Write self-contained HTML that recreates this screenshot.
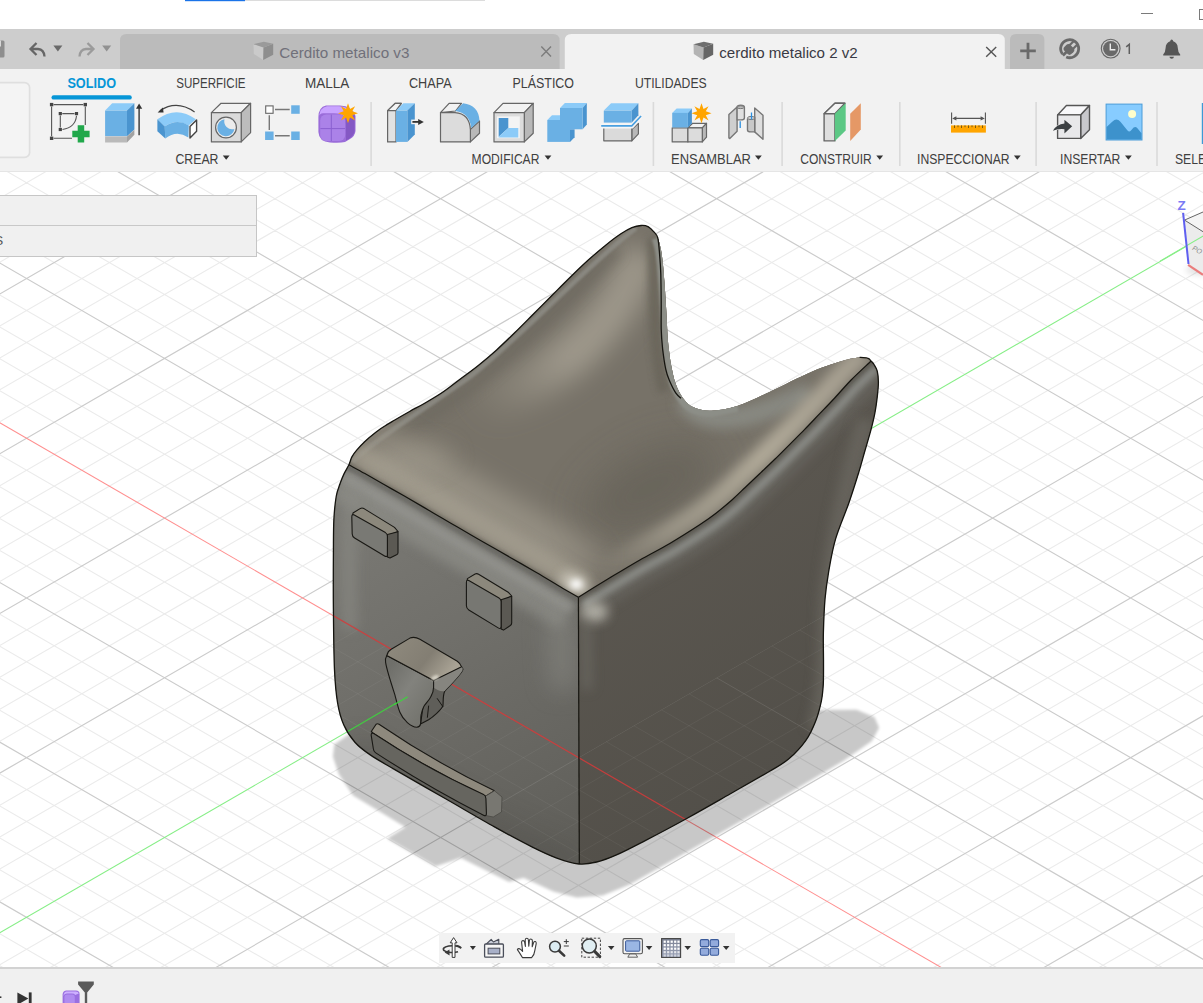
<!DOCTYPE html>
<html><head><meta charset="utf-8"><title>Fusion 360</title>
<style>
*{box-sizing:border-box;margin:0;padding:0}
html,body{width:1203px;height:1003px;overflow:hidden;background:#fff}
body{font-family:"Liberation Sans",sans-serif;position:relative;color:#3c3c3c}
.abs{position:absolute}
#titlebar{left:0;top:0;width:1203px;height:29px;background:#fff}
#tabbar{left:0;top:29px;width:1203px;height:40px;background:#cdcdcd}
#toolbar{left:0;top:69px;width:1203px;height:102.6px;background:#f2f2f2;border-bottom:1.6px solid #e5e5e5;z-index:2}
#viewport{left:0;top:170px;width:1203px;height:797px;background:#fff;overflow:hidden}
#bottombar{left:0;top:967px;width:1203px;height:36px;background:#f0f0f0;border-top:2px solid #d2d2d2}
.tab{position:absolute;top:5px;height:35px;border-radius:6px 6px 0 0;font-size:14px}
.rt{position:absolute;font-size:12.5px;color:#3c3c3c;white-space:nowrap;line-height:14px}
.gl{position:absolute;font-size:11.5px;color:#3c3c3c;white-space:nowrap;line-height:13px}
.sep{position:absolute;top:32px;width:1px;height:64px;background:#dadada}
svg{position:absolute;overflow:visible}
</style></head><body>
<div id="titlebar" class="abs"></div>
<div id="tabbar" class="abs"></div>
<div id="toolbar" class="abs"></div>
<svg width="1203" height="171" viewBox="0 0 1203 171" style="left:0;top:0;z-index:3" font-family="Liberation Sans, sans-serif">
<!-- title strip -->
<rect x="185" y="0" width="60" height="1.2" fill="#1a73e8"/>
<rect x="245" y="0" width="240" height="1" fill="#dcdcdc"/>
<rect x="1141" y="13" width="12" height="1" fill="#7a7a7a"/>
<rect x="1199.5" y="9.5" width="10" height="10" fill="none" stroke="#7a7a7a" stroke-width="1"/>
<!-- tabs -->
<path d="M120 69 V40.5 Q120 34 126.5 34 H553.1 Q559.6 34 559.6 40.5 V69Z" fill="#bbbbbb"/>
<path d="M564.8 69 V40.5 Q564.8 34 571.3 34 H998.3 Q1004.8 34 1004.8 40.5 V69Z" fill="#f2f2f2"/>
<path d="M1010 69 V40 Q1010 34 1016 34 H1038.4 Q1044.4 34 1044.4 40 V69Z" fill="#bbbbbb"/>
<!-- save partial, undo, redo -->
<rect x="-3" y="40.5" width="7.5" height="17" rx="1.5" fill="#8e8e8e"/>
<rect x="-1" y="40.5" width="2" height="6" fill="#d8d8d8"/>
<path d="M36.5 43 L30.5 49 L36.5 55 M31 49 H38 Q44 49.5 44.5 56.5" fill="none" stroke="#666" stroke-width="2.3" stroke-linejoin="miter"/>
<path d="M53.4 45.4 H62.4 L57.9 51.4Z" fill="#6a6a6a"/>
<path d="M87.5 43 L93.5 49 L87.5 55 M93 49 H86 Q80 49.5 79.5 56.5" fill="none" stroke="#9b9b9b" stroke-width="2.3"/>
<path d="M102.2 45.4 H111.2 L106.7 51.4Z" fill="#919191"/>
<!-- inactive tab content -->
<g>
<path d="M253.5 44.2 L263.5 47.6 L263.2 59.9 L253.8 53.9Z" fill="#cacaca"/>
<path d="M263.5 47.6 L273.2 43.8 L273.2 54.7 L263.2 59.9Z" fill="#8e8e8e"/>
<path d="M253.5 44.2 L263.9 41.7 L273.2 43.8 L263.5 47.6Z" fill="#9a9a9a"/>
</g>
<text x="279.2" y="57.6" font-size="15" fill="#70707a" textLength="130.2" lengthAdjust="spacingAndGlyphs">Cerdito metalico v3</text>
<path d="M541.3 46.5 L551 56.6 M551 46.5 L541.3 56.6" stroke="#7c7c7c" stroke-width="1.4"/>
<!-- active tab content -->
<g>
<path d="M693.5 44.2 L703.5 47.6 L703.2 59.9 L693.8 53.9Z" fill="#b4b4b4"/>
<path d="M703.5 47.6 L713.2 43.8 L713.2 54.7 L703.2 59.9Z" fill="#666"/>
<path d="M693.5 44.2 L703.9 41.7 L713.2 43.8 L703.5 47.6Z" fill="#6e6e6e"/>
</g>
<text x="719.2" y="57.6" font-size="15" fill="#3a3a44" textLength="138.6" lengthAdjust="spacingAndGlyphs">cerdito metalico 2 v2</text>
<path d="M986.2 46.9 L996.2 56.8 M996.2 46.9 L986.2 56.8" stroke="#555" stroke-width="1.4"/>
<!-- plus -->
<path d="M1028 42.8 V59 M1020.2 50.9 H1035.8" stroke="#6a6a6a" stroke-width="2.8"/>
<!-- job status -->
<path d="M1062.4 54 A9 9 0 1 1 1066.2 57" fill="none" stroke="#6a6a6a" stroke-width="2.8"/>
<g transform="rotate(45 1069.8 48.6)" fill="#6a6a6a">
<rect x="1064.8" y="45.6" width="10" height="8.4" rx="3"/>
<rect x="1066.2" y="40.4" width="2.2" height="6.4"/><rect x="1071.2" y="40.4" width="2.2" height="6.4"/>
<rect x="1068.4" y="53" width="2.8" height="5.4"/>
</g>
<!-- clock -->
<circle cx="1110.7" cy="48.6" r="9.4" fill="none" stroke="#666" stroke-width="1.1"/>
<circle cx="1110.7" cy="48.6" r="7.6" fill="#696969"/>
<path d="M1110.3 43.6 V49.7 H1115.4" fill="none" stroke="#ececec" stroke-width="1.4"/>
<path d="M1126.2 46.9 L1129.3 44.4 V53.9" fill="none" stroke="#5e5e5e" stroke-width="1.5"/>
<!-- bell -->
<path d="M1171.7 39.6 Q1173 39.6 1173.2 41.2 Q1177.6 42.6 1177.8 48 Q1178 52.5 1180.2 54.6 V55.6 H1163.2 V54.6 Q1165.4 52.5 1165.6 48 Q1165.8 42.6 1170.2 41.2 Q1170.4 39.6 1171.7 39.6Z" fill="#555"/>
<path d="M1169.4 56.8 H1174 Q1173.6 58.8 1171.7 58.8 Q1169.8 58.8 1169.4 56.8Z" fill="#555"/>
<!-- workspace box -->
<rect x="-10" y="82.6" width="39.6" height="74.8" rx="5" fill="#f4f4f4" stroke="#dfdfdf" stroke-width="1.7"/>
<!-- ribbon tabs -->
<g font-size="14" fill="#404040">
<text x="67.4" y="87.8" font-weight="bold" fill="#0696d7" textLength="48.6" lengthAdjust="spacingAndGlyphs">SOLIDO</text>
<text x="176.2" y="87.8" textLength="69.4" lengthAdjust="spacingAndGlyphs">SUPERFICIE</text>
<text x="305" y="87.8" textLength="44.4" lengthAdjust="spacingAndGlyphs">MALLA</text>
<text x="409" y="87.8" textLength="42.6" lengthAdjust="spacingAndGlyphs">CHAPA</text>
<text x="512.5" y="87.8" textLength="61.5" lengthAdjust="spacingAndGlyphs">PLÁSTICO</text>
<text x="634.9" y="87.8" textLength="71.8" lengthAdjust="spacingAndGlyphs">UTILIDADES</text>
</g>
<rect x="51.5" y="95.2" width="80.3" height="4.4" rx="2.2" fill="#0696d7"/>
<!-- separators -->
<g fill="#dadada">
<rect x="370.3" y="102" width="1.6" height="64"/><rect x="652.6" y="102" width="1.6" height="64"/><rect x="781.3" y="102" width="1.6" height="64"/>
<rect x="899" y="102" width="1.6" height="64"/><rect x="1035.3" y="102" width="1.6" height="64"/><rect x="1156.2" y="102" width="1.6" height="64"/>
</g>
<!-- group labels -->
<g font-size="14" fill="#404040">
<text x="175.5" y="163.7" textLength="43" lengthAdjust="spacingAndGlyphs">CREAR</text>
<text x="471.6" y="163.7" textLength="67.8" lengthAdjust="spacingAndGlyphs">MODIFICAR</text>
<text x="671" y="163.7" textLength="79.9" lengthAdjust="spacingAndGlyphs">ENSAMBLAR</text>
<text x="800.2" y="163.7" textLength="71.6" lengthAdjust="spacingAndGlyphs">CONSTRUIR</text>
<text x="917" y="163.7" textLength="92.6" lengthAdjust="spacingAndGlyphs">INSPECCIONAR</text>
<text x="1060" y="163.7" textLength="60.4" lengthAdjust="spacingAndGlyphs">INSERTAR</text>
<text x="1175" y="163.7" textLength="87.2" lengthAdjust="spacingAndGlyphs">SELECCIONAR</text>
</g>
<g fill="#333">
<path d="M222.8 155.4 h6.8 l-3.4 4.3z"/><path d="M544.6 155.4 h6.8 l-3.4 4.3z"/><path d="M755 155.4 h6.8 l-3.4 4.3z"/>
<path d="M876.3 155.4 h6.8 l-3.4 4.3z"/><path d="M1013.9 155.4 h6.8 l-3.4 4.3z"/><path d="M1125 155.4 h6.8 l-3.4 4.3z"/>
</g>
<rect x="1201.8" y="103" width="2" height="41" fill="#3d9ad6"/>
<!-- ICON 1 sketch -->
<g stroke="#555" stroke-width="1.1" fill="none">
<path d="M53.6 104.6 H83.3 M51.6 106.6 V136.3 M85.3 106.6 V125 M53.6 138.3 H72"/>
<path d="M62.3 113.6 H74.5 M60.3 115.6 V127.5 M76.5 115.8 Q75.5 127.5 62.5 129.5"/>
</g>
<g fill="#444">
<rect x="49.9" y="102.9" width="3.4" height="3.4"/><rect x="83.6" y="102.9" width="3.4" height="3.4"/><rect x="49.9" y="136.6" width="3.4" height="3.4"/>
<rect x="58.7" y="112" width="3.2" height="3.2"/><rect x="74.9" y="112" width="3.2" height="3.2"/><rect x="58.7" y="127.9" width="3.2" height="3.2"/>
</g>
<path d="M77.7 125.3 h6.5 v5.4 h5.4 v6.5 h-5.4 v5.4 h-6.5 v-5.4 h-5.4 v-6.5 h5.4z" fill="#21a84b"/>
<!-- ICON 2 extrude -->
<path d="M105.1 110.6 L112.2 103.3 H134.4 L127 110.6Z" fill="#8ccbf8"/>
<path d="M127 110.6 L134.4 103.3 V129.6 L127 136.2Z" fill="#4a94cf"/>
<rect x="105.1" y="110.6" width="21.9" height="25.6" fill="#6ab0e4"/>
<rect x="105.1" y="136.4" width="21.9" height="6.1" fill="#bababa"/>
<path d="M127 136.4 L134.4 129.8 V134.8 L127 142.5Z" fill="#a2a2a2"/>
<path d="M139.1 108 V135.2" stroke="#333" stroke-width="1.4"/><path d="M139.1 103.4 L142.2 108.8 H136Z" fill="#333"/>
<!-- ICON 3 revolve -->
<path d="M194.6 112 Q176.6 99.5 160 110.8" fill="none" stroke="#444" stroke-width="1.2"/>
<path d="M157.6 112.4 L162.8 107.4 L163.6 112.6Z" fill="#333"/>
<path d="M157.4 119.3 Q176.6 105 195.9 119.3 L188.6 125.6 Q176.6 118 164.7 126.6Z" fill="#8ccbf8"/>
<path d="M164.7 126.6 Q176.6 118 188.8 125.4 L188.4 137.4 Q176.6 129.5 165.3 138.6Z" fill="#6ab0e4"/>
<path d="M157.4 119.3 L164.7 126.6 L165.3 138.6 L157.4 131.2Z" fill="#4a94cf"/>
<path d="M190 126.6 L196.6 120 V131.2 L190 137.9Z" fill="#fff" stroke="#444" stroke-width="1.4" stroke-linejoin="round"/>
<!-- ICON 4 hole -->
<g stroke="#666" stroke-width="1.2" stroke-linejoin="round">
<path d="M211.4 112.6 L221 103.3 H250.6 L241.2 112.6Z" fill="#f2f2f2"/>
<path d="M241.2 112.6 L250.6 103.3 V132.6 L241.2 141.9Z" fill="#bcbcbc"/>
<rect x="211.4" y="112.6" width="29.8" height="29.3" fill="#dadada"/>
<circle cx="226" cy="127.5" r="10.4" fill="#ececec"/>
</g>
<path d="M224.5 119.2 A8.6 8.6 0 1 0 234.4 129 A8 8 0 0 1 224.5 119.2Z" fill="#6ab0e4"/>
<!-- ICON 5 pattern -->
<path d="M275 109.5 H289.7 M275 135.7 H289.7 M269.3 115.3 V130" stroke="#777" stroke-width="1.4"/>
<rect x="265.7" y="105.9" width="7.4" height="7.4" fill="#fff" stroke="#666" stroke-width="1.1"/>
<rect x="291.2" y="105.3" width="8.5" height="8.5" fill="#6ab0e4"/><rect x="265.1" y="131.5" width="8.5" height="8.5" fill="#6ab0e4"/><rect x="291.2" y="131.5" width="8.5" height="8.5" fill="#6ab0e4"/>
<!-- ICON 6 form -->
<path d="M326 105.5 H340 Q352 106 355.5 116 V131 Q355 136 350 139 L345 142 Q340 143 330 142.4 Q319 142 318.4 132 V117 Q318.6 107 326 105.5Z" fill="#9a6cd9"/>
<path d="M327 106.2 H339 Q350 107 353.6 113 L345 117 Q342 113 333 113.2 H323 Q319.5 113.6 319.2 116 Q319.6 108 327 106.2Z" fill="#c9a3ff"/>
<rect x="320.2" y="114.5" width="25" height="26.5" rx="6" fill="#ab82e8"/>
<path d="M345.8 118 L354.6 115 V131 Q354 135.5 349.5 138.4 L346 140.4Z" fill="#8458c4"/>
<path d="M331.3 114.6 V141 M320.4 128.6 H345" stroke="#8a5fd0" stroke-width="1"/>
<path d="M348 103.3 L350 109 L355.1 106.2 L352.3 111.3 L358 113.3 L352.3 115.3 L355.1 120.4 L350 117.6 L348 123.3 L346 117.6 L340.9 120.4 L343.7 115.3 L338 113.3 L343.7 111.3 L340.9 106.2 L346 109Z" fill="#ffa500"/>
<!-- ICON 7 press pull -->
<g stroke-linejoin="round">
<path d="M387.6 110.6 L395.3 103.3 H401.3 L396 110.6 V141.9 H387.6Z" fill="#e2e2e2" stroke="#666" stroke-width="1.2"/>
<path d="M387.6 110.6 L395.3 103.3 H401.3 L396 110.6Z" fill="#f4f4f4" stroke="#666" stroke-width="1.2"/>
<path d="M396 110.6 L403.3 103.3 H414.8 L407.3 110.6Z" fill="#8ccbf8"/>
<path d="M407.3 110.6 L414.8 103.3 V134.6 L407.3 141.9Z" fill="#4a94cf"/>
<rect x="396" y="110.6" width="11.3" height="31.3" fill="#6ab0e4"/>
<rect x="411.2" y="119.6" width="4" height="4.6" fill="#f2f2f2"/>
<path d="M412.4 121.9 H419.5" stroke="#333" stroke-width="1.8"/><path d="M423.8 121.9 L418.2 118.9 V124.9Z" fill="#333"/>
</g>
<!-- ICON 8 fillet -->
<g stroke-linejoin="round">
<path d="M440.5 112.6 L449.1 103.3 H461.5 L455.5 111Z" fill="#f2f2f2" stroke="#666" stroke-width="1.2"/>
<path d="M470.2 129.6 L479.5 121 V133.2 L470.4 141.9Z" fill="#b8b8b8" stroke="#666" stroke-width="1.2"/>
<path d="M440.5 112.6 H455 Q469.5 113.5 470.4 129.6 V141.9 H440.5Z" fill="#dcdcdc" stroke="#666" stroke-width="1.2"/>
<path d="M455.3 111 L463.1 103.3 Q478.5 105 479.5 120.6 L471.3 128 Q469.5 113 455.3 111Z" fill="#6ab0e4"/>
</g>
<!-- ICON 9 shell -->
<g stroke="#666" stroke-width="1.2" stroke-linejoin="round">
<path d="M494 112.6 L503 103.3 H533.2 L524.3 112.6Z" fill="#f2f2f2"/>
<path d="M524.3 112.6 L533.2 103.3 V133.2 L524.3 141.9Z" fill="#b8b8b8"/>
<rect x="494" y="112.6" width="30.3" height="29.3" fill="#dcdcdc"/>
</g>
<rect x="497" y="116.4" width="22.8" height="21.8" fill="#f4f4f4"/>
<path d="M498.7 117.9 H508.3 V127.9 L498.7 136.8Z" fill="#4a94cf"/>
<path d="M508.3 127.9 H518.3 V137.4 H498.7 V136.8Z" fill="#8ccbf8"/>
<!-- ICON 10 combine -->
<path d="M547.3 120 L552 115.3 H560 V120Z" fill="#8ccbf8"/>
<rect x="547.3" y="120" width="22.7" height="21.9" fill="#6ab0e4"/>
<path d="M570 129.3 H574.6 V137.2 L570 141.9Z" fill="#4a94cf"/>
<path d="M560 108 L564.9 103 H586.8 L582.6 108Z" fill="#8ccbf8"/>
<path d="M582.6 108 L586.8 103 V124.6 L582.6 129.3Z" fill="#4a94cf"/>
<rect x="560" y="108" width="22.6" height="21.3" fill="#6ab0e4"/>
<!-- ICON 11 split -->
<g stroke="#666" stroke-width="1.2" stroke-linejoin="round">
<path d="M631.8 129.3 L638.4 123.3 V133.9 L631.8 140.8Z" fill="#b8b8b8"/>
<path d="M603.8 127 V140.8 H631.8 V127" fill="#dadada"/>
</g>
<path d="M600.8 123.4 H632.5 L641.5 114.5 V119 L632.8 128.6 H600.8Z" fill="#f6f6f6"/>
<path d="M601.2 125.9 H631.8 L641.1 116" fill="none" stroke="#4aa0e0" stroke-width="1.6"/>
<path d="M603.8 110.6 L611.1 103.3 H638.4 L631.8 110.6Z" fill="#8ccbf8"/>
<path d="M631.8 110.6 L638.4 103.3 V115.3 L631.8 122.6Z" fill="#4a94cf"/>
<rect x="603.8" y="110.6" width="28" height="12" fill="#6ab0e4"/>
<!-- ICON 12 new component -->
<g stroke="#666" stroke-width="1.2" stroke-linejoin="round">
<rect x="672.2" y="127.9" width="15.7" height="14" fill="#dcdcdc"/>
<path d="M687.9 127.9 L692.6 123.3 H706.5 L702.3 127.9Z" fill="#f2f2f2"/>
<path d="M702.3 127.9 L706.5 123.3 V137.2 L702.3 141.9Z" fill="#b8b8b8"/>
<rect x="687.9" y="127.9" width="14.4" height="14" fill="#dcdcdc"/>
</g>
<path d="M672.2 112.9 L676.6 108.4 H691.9 L687.9 112.9Z" fill="#8ccbf8"/>
<path d="M687.9 112.9 L691.9 108.4 V123.3 L687.9 127.5Z" fill="#4a94cf"/>
<rect x="672.2" y="112.9" width="15.7" height="14.6" fill="#6ab0e4"/>
<path d="M701.5 103.3 L703.5 109 L708.6 106.2 L705.8 111.3 L711.5 113.3 L705.8 115.3 L708.6 120.4 L703.5 117.6 L701.5 123.3 L699.5 117.6 L694.4 120.4 L697.2 115.3 L691.5 113.3 L697.2 111.3 L694.4 106.2 L699.5 109Z" fill="#ffa500"/>
<!-- ICON 13 joint -->
<g stroke="#777" stroke-width="1.4" stroke-linejoin="round">
<path d="M728.9 114.6 L737.1 107 V131.2 L729.8 138.6 L728.9 137.9Z" fill="#cfcfcf"/>
<path d="M737.1 107.3 Q737.1 105.3 740.7 105.3 Q744.4 105.3 744.4 107.3 V118 Q744.4 119.9 740.7 119.9 L737.1 119.9Z" fill="#e0e0e0"/>
<ellipse cx="740.7" cy="107.2" rx="3.5" ry="1.4" fill="#bdbdbd" stroke-width="1"/>
<path d="M754.7 108 L763 115.3 V139.2 L754.7 131.9Z" fill="#dedede"/>
<path d="M747.5 118.6 V130 Q747.5 131.9 751 131.9 L754.7 131.9 V116.8" fill="#c8c8c8"/>
<ellipse cx="751.1" cy="118" rx="3.6" ry="1.6" fill="#d8d8d8" stroke-width="1"/>
</g>
<path d="M740.2 121.3 V127.9 M751.5 112.6 V119.6" stroke="#2a8fe0" stroke-width="1.3"/>
<!-- ICON 14 construct -->
<path d="M824.1 113.8 L834.9 103.3 H844.9 L834.9 113.8 V140.9 H824.1Z" fill="#dedede" stroke="#666" stroke-width="1.4" stroke-linejoin="round"/>
<path d="M824.1 113.8 L834.9 103.3 H844.9 L834.9 113.8Z" fill="#f4f4f4" stroke="#666" stroke-width="1.4" stroke-linejoin="round"/>
<path d="M834.9 113.8 L845.7 103.3 V130.4 L834.9 140.9Z" fill="#5cc885"/>
<path d="M850.2 113.8 L860.8 103.3 V129.6 L850.2 140.9Z" fill="#e59866"/>
<!-- ICON 15 measure -->
<rect x="951" y="125.4" width="34.9" height="7.2" fill="#ffa500"/>
<path d="M954.5 125.4 v2.6 M958 125.4 v1.8 M961.5 125.4 v2.6 M965 125.4 v1.8 M968.5 125.4 v2.6 M972 125.4 v1.8 M975.5 125.4 v2.6 M979 125.4 v1.8 M982.5 125.4 v2.6" stroke="#7a5a10" stroke-width="1"/>
<path d="M951.6 112.6 V123.8 M985.4 112.6 V123.8 M954 118.4 H983" stroke="#555" stroke-width="1.1"/>
<path d="M952.2 118.4 L956.4 116.2 V120.6Z M984.8 118.4 L980.6 116.2 V120.6Z" fill="#555"/>
<!-- ICON 16 insert derive -->
<g stroke="#555" stroke-width="1.4" stroke-linejoin="round">
<path d="M1057.6 114.9 L1066.4 105.5 H1089.5 L1080.7 114.9Z" fill="#f8f8fa"/>
<path d="M1080.7 114.9 L1089.5 105.5 V129.8 L1080.7 138.4Z" fill="#c8c8cc"/>
<rect x="1057.6" y="114.9" width="23.1" height="23.5" fill="#e8e8ea"/>
</g>
<path d="M1064.4 119.7 L1072.2 126.2 L1064.4 133.5 V129.2 Q1057.5 128.6 1052.9 130.8 Q1056.5 124.4 1064.4 123.6Z" fill="#3c4043" stroke="#f2f2f2" stroke-width="1" paint-order="stroke"/>
<!-- ICON 17 canvas -->
<rect x="1106.1" y="104.1" width="35.9" height="35.9" fill="#87ccff" stroke="#4a9cd8" stroke-width="1"/>
<circle cx="1132.1" cy="114" r="4" fill="#ffffcc"/>
<path d="M1106.6 127.1 L1112.5 121.4 Q1116.6 117.2 1120.4 121.8 L1127.5 130.6 Q1129.4 132.4 1131 130.4 L1133.6 127.6 Q1135.5 126 1137.4 128.2 L1141.5 133.2 V139.5 H1106.6Z" fill="#3d92cc"/>

</svg>
<div id="viewport" class="abs">
<svg width="1203" height="797" viewBox="0 170 1203 797" style="left:0;top:0;overflow:hidden">
<defs>
<clipPath id="cSil"><path d="M641.1 225.5 C643.9 225.3 646.3 225.7 648.4 226.8 C650.5 227.9 652.3 230.0 653.9 231.9 C655.5 233.8 656.6 235.0 657.8 238.0 C659.0 241.0 660.1 245.5 661.0 250.0 C661.9 254.5 662.4 259.4 663.0 264.9 C663.6 270.4 664.0 276.9 664.5 283.0 C665.0 289.1 665.3 295.2 665.7 301.4 C666.1 307.6 666.5 313.9 666.8 320.0 C667.1 326.1 667.3 332.7 667.7 338.0 C668.1 343.3 668.6 347.3 669.2 352.0 C669.8 356.7 670.2 360.7 671.3 366.0 C672.4 371.3 673.7 378.6 675.7 384.0 C677.7 389.4 680.2 394.5 683.2 398.4 C686.2 402.3 689.3 405.6 694.0 407.6 C698.7 409.7 704.1 411.0 711.3 410.7 C718.5 410.4 727.6 409.0 737.3 405.9 C747.0 402.8 757.1 397.7 769.7 391.9 C782.3 386.1 800.3 376.6 812.9 371.3 C825.5 366.0 837.5 362.4 845.3 360.1 C853.1 357.8 855.8 357.7 859.6 357.4 C863.4 357.1 866.2 357.7 868.1 358.3 C870.0 358.9 870.0 360.0 871.0 361.0 C872.0 362.0 873.0 362.8 874.0 364.5 C875.0 366.2 876.5 368.1 877.2 371.0 C877.9 373.9 878.4 377.7 878.4 382.1 C878.4 386.5 877.8 392.2 877.2 397.3 C876.6 402.4 876.0 407.0 875.0 412.4 C874.0 417.8 872.7 423.2 871.0 429.7 C869.3 436.2 866.9 444.1 864.8 451.3 C862.7 458.5 861.2 464.4 858.6 472.9 C856.0 481.3 853.0 491.0 849.2 502.0 C845.4 513.0 839.1 527.1 835.6 538.9 C832.1 550.7 830.2 562.9 828.5 572.8 C826.8 582.7 826.0 588.4 825.1 598.3 C824.2 608.2 823.7 621.9 823.4 632.2 C823.1 642.5 823.5 651.4 823.5 660.0 C823.5 668.6 823.6 677.2 823.3 684.0 C822.9 690.8 822.6 694.8 821.4 700.9 C820.1 707.0 818.4 714.1 815.8 720.7 C813.2 727.3 810.4 734.0 805.9 740.4 C801.4 746.8 795.0 753.6 788.9 758.8 C782.8 764.0 779.1 765.6 769.2 771.5 C759.3 777.4 743.3 786.4 729.6 794.2 C715.9 802.0 701.3 810.4 687.2 818.2 C673.1 826.0 656.6 834.7 644.8 840.8 C633.0 846.9 624.5 851.4 616.5 854.9 C608.5 858.4 603.0 860.5 596.7 862.0 C590.5 863.5 585.6 864.6 579.0 864.0 C572.4 863.4 564.6 861.0 556.8 858.1 C548.9 855.2 542.3 852.1 531.9 846.9 C521.5 841.7 509.0 835.0 494.5 826.9 C480.0 818.8 461.3 807.8 444.7 798.3 C428.1 788.8 407.3 776.9 394.8 769.6 C382.3 762.3 376.5 759.2 369.9 754.6 C363.2 750.0 359.3 747.2 354.9 742.2 C350.5 737.2 346.6 731.4 343.7 724.7 C340.8 718.1 339.0 711.4 337.5 702.3 C336.0 693.2 335.2 685.3 334.5 669.9 C333.8 654.5 333.6 629.1 333.4 609.6 C333.2 590.1 333.3 568.2 333.4 553.1 C333.5 538.0 333.4 528.5 333.9 519.1 C334.4 509.7 335.2 502.4 336.2 496.5 C337.2 490.6 338.7 487.6 340.0 483.8 C341.3 480.0 342.5 477.1 344.0 473.9 C345.5 470.7 347.6 467.6 348.9 464.8 C350.2 462.0 350.6 459.4 351.9 456.9 C353.2 454.4 354.7 452.5 356.9 449.9 C359.1 447.3 361.9 444.2 364.9 441.4 C367.9 438.6 371.6 435.6 374.9 433.0 C378.2 430.4 381.6 428.2 384.9 426.0 C388.2 423.8 390.6 422.5 394.8 420.0 C399.0 417.5 405.0 414.0 410.0 411.2 C415.0 408.4 419.2 406.4 424.7 403.2 C430.2 400.0 437.1 396.0 443.0 392.0 C448.9 388.0 454.1 383.6 460.0 379.2 C465.9 374.8 472.2 370.3 478.3 365.4 C484.4 360.5 490.5 355.4 496.6 349.9 C502.7 344.4 508.8 338.4 514.9 332.5 C521.0 326.6 527.1 320.3 533.2 314.2 C539.3 308.1 545.3 302.1 551.4 296.0 C557.5 289.9 563.6 283.6 569.7 277.7 C575.8 271.8 581.9 265.8 588.0 260.3 C594.1 254.8 600.8 249.1 606.3 244.7 C611.8 240.3 616.6 236.6 620.9 233.8 C625.2 231.0 628.5 229.1 631.9 227.7 C635.3 226.3 638.4 225.7 641.1 225.5Z"/></clipPath>
<clipPath id="cTop"><path d="M348.9 464.8 C349.4 463.5 350.6 459.4 351.9 456.9 C353.2 454.4 354.7 452.5 356.9 449.9 C359.1 447.3 361.9 444.2 364.9 441.4 C367.9 438.6 371.6 435.6 374.9 433.0 C378.2 430.4 381.6 428.2 384.9 426.0 C388.2 423.8 390.6 422.5 394.8 420.0 C399.0 417.5 405.0 414.0 410.0 411.2 C415.0 408.4 419.2 406.4 424.7 403.2 C430.2 400.0 437.1 396.0 443.0 392.0 C448.9 388.0 454.1 383.6 460.0 379.2 C465.9 374.8 472.2 370.3 478.3 365.4 C484.4 360.5 490.5 355.4 496.6 349.9 C502.7 344.4 508.8 338.4 514.9 332.5 C521.0 326.6 527.1 320.3 533.2 314.2 C539.3 308.1 545.3 302.1 551.4 296.0 C557.5 289.9 563.6 283.6 569.7 277.7 C575.8 271.8 581.9 265.8 588.0 260.3 C594.1 254.8 600.8 249.1 606.3 244.7 C611.8 240.3 616.6 236.6 620.9 233.8 C625.2 231.0 628.5 229.1 631.9 227.7 C635.3 226.3 638.4 225.7 641.1 225.5 C643.9 225.3 646.3 225.7 648.4 226.8 C650.5 227.9 652.3 230.0 653.9 231.9 C655.5 233.8 656.6 235.0 657.8 238.0 C659.0 241.0 660.1 245.5 661.0 250.0 C661.9 254.5 662.4 259.4 663.0 264.9 C663.6 270.4 664.0 276.9 664.5 283.0 C665.0 289.1 665.3 295.2 665.7 301.4 C666.1 307.6 666.5 313.9 666.8 320.0 C667.1 326.1 667.3 332.7 667.7 338.0 C668.1 343.3 668.6 347.3 669.2 352.0 C669.8 356.7 670.2 360.7 671.3 366.0 C672.4 371.3 673.7 378.6 675.7 384.0 C677.7 389.4 680.2 394.5 683.2 398.4 C686.2 402.3 689.3 405.6 694.0 407.6 C698.7 409.7 704.1 411.0 711.3 410.7 C718.5 410.4 727.6 409.0 737.3 405.9 C747.0 402.8 757.1 397.7 769.7 391.9 C782.3 386.1 800.3 376.6 812.9 371.3 C825.5 366.0 837.5 362.4 845.3 360.1 C853.1 357.8 855.8 357.7 859.6 357.4 C863.4 357.1 866.2 357.7 868.1 358.3 C870.0 358.9 870.5 360.6 871.0 361.0 C867.7 364.2 857.1 373.8 851.1 380.0 C845.1 386.2 839.9 392.4 834.7 398.0 C829.5 403.6 824.7 408.5 819.7 413.7 C814.7 418.9 809.7 424.3 804.7 429.4 C799.7 434.5 794.8 439.3 789.8 444.3 C784.8 449.3 779.8 454.4 774.8 459.3 C769.8 464.2 764.9 468.8 759.9 473.5 C754.9 478.2 749.5 483.3 744.9 487.7 C740.3 492.1 737.0 495.4 732.2 499.7 C727.4 503.9 721.4 509.0 716.0 513.2 C710.6 517.4 707.4 519.7 699.7 524.7 C692.0 529.7 679.8 537.5 669.8 543.4 C659.8 549.3 649.9 554.2 639.9 559.9 C629.9 565.6 620.1 571.6 609.9 577.8 C599.6 584.0 583.6 594.0 578.4 597.3 C575.8 595.8 570.0 592.5 563.0 588.4 C556.0 584.3 545.3 577.7 536.4 572.5 C527.5 567.3 518.7 562.3 509.8 557.2 C500.9 552.1 492.1 547.0 483.2 541.9 C474.3 536.8 465.5 531.8 456.6 526.6 C447.7 521.5 438.6 516.0 430.0 511.0 C421.4 505.9 412.3 500.6 404.8 496.3 C397.3 492.0 391.5 488.8 384.9 485.0 C378.2 481.2 370.9 477.0 364.9 473.6 C358.9 470.2 351.6 466.3 348.9 464.8Z"/></clipPath>
<clipPath id="cRight"><path d="M871.0 361.0 C871.5 361.6 873.0 362.8 874.0 364.5 C875.0 366.2 876.5 368.1 877.2 371.0 C877.9 373.9 878.4 377.7 878.4 382.1 C878.4 386.5 877.8 392.2 877.2 397.3 C876.6 402.4 876.0 407.0 875.0 412.4 C874.0 417.8 872.7 423.2 871.0 429.7 C869.3 436.2 866.9 444.1 864.8 451.3 C862.7 458.5 861.2 464.4 858.6 472.9 C856.0 481.3 853.0 491.0 849.2 502.0 C845.4 513.0 839.1 527.1 835.6 538.9 C832.1 550.7 830.2 562.9 828.5 572.8 C826.8 582.7 826.0 588.4 825.1 598.3 C824.2 608.2 823.7 621.9 823.4 632.2 C823.1 642.5 823.5 651.4 823.5 660.0 C823.5 668.6 823.6 677.2 823.3 684.0 C822.9 690.8 822.6 694.8 821.4 700.9 C820.1 707.0 818.4 714.1 815.8 720.7 C813.2 727.3 810.4 734.0 805.9 740.4 C801.4 746.8 795.0 753.6 788.9 758.8 C782.8 764.0 779.1 765.6 769.2 771.5 C759.3 777.4 743.3 786.4 729.6 794.2 C715.9 802.0 701.3 810.4 687.2 818.2 C673.1 826.0 656.6 834.7 644.8 840.8 C633.0 846.9 624.5 851.4 616.5 854.9 C608.5 858.4 603.0 860.5 596.7 862.0 C590.5 863.5 582.0 863.7 579.0 864.0 L578.4 597.3 C583.6 594.0 599.6 584.0 609.9 577.8 C620.1 571.6 629.9 565.6 639.9 559.9 C649.9 554.2 659.8 549.3 669.8 543.4 C679.8 537.5 692.0 529.7 699.7 524.7 C707.4 519.7 710.6 517.4 716.0 513.2 C721.4 509.0 727.4 503.9 732.2 499.7 C737.0 495.4 740.3 492.1 744.9 487.7 C749.5 483.3 754.9 478.2 759.9 473.5 C764.9 468.8 769.8 464.2 774.8 459.3 C779.8 454.4 784.8 449.3 789.8 444.3 C794.8 439.3 799.7 434.5 804.7 429.4 C809.7 424.3 814.7 418.9 819.7 413.7 C824.7 408.5 829.5 403.6 834.7 398.0 C839.9 392.4 845.1 386.2 851.1 380.0 C857.1 373.8 867.7 364.2 871.0 361.0Z"/></clipPath>
<clipPath id="cFront"><path d="M579.0 864.0 C575.3 863.0 564.6 861.0 556.8 858.1 C548.9 855.2 542.3 852.1 531.9 846.9 C521.5 841.7 509.0 835.0 494.5 826.9 C480.0 818.8 461.3 807.8 444.7 798.3 C428.1 788.8 407.3 776.9 394.8 769.6 C382.3 762.3 376.5 759.2 369.9 754.6 C363.2 750.0 359.3 747.2 354.9 742.2 C350.5 737.2 346.6 731.4 343.7 724.7 C340.8 718.1 339.0 711.4 337.5 702.3 C336.0 693.2 335.2 685.3 334.5 669.9 C333.8 654.5 333.6 629.1 333.4 609.6 C333.2 590.1 333.3 568.2 333.4 553.1 C333.5 538.0 333.4 528.5 333.9 519.1 C334.4 509.7 335.2 502.4 336.2 496.5 C337.2 490.6 338.7 487.6 340.0 483.8 C341.3 480.0 342.5 477.1 344.0 473.9 C345.5 470.7 348.1 466.3 348.9 464.8 C351.6 466.3 358.9 470.2 364.9 473.6 C370.9 477.0 378.2 481.2 384.9 485.0 C391.5 488.8 397.3 492.0 404.8 496.3 C412.3 500.6 421.4 505.9 430.0 511.0 C438.6 516.0 447.7 521.5 456.6 526.6 C465.5 531.8 474.3 536.8 483.2 541.9 C492.1 547.0 500.9 552.1 509.8 557.2 C518.7 562.3 527.5 567.3 536.4 572.5 C545.3 577.7 556.0 584.3 563.0 588.4 C570.0 592.5 575.8 595.8 578.4 597.3 L579 864Z"/></clipPath>
<filter id="b1" filterUnits="userSpaceOnUse" x="0" y="170" width="1203" height="800"><feGaussianBlur stdDeviation="1"/></filter>
<filter id="b2" filterUnits="userSpaceOnUse" x="0" y="170" width="1203" height="800"><feGaussianBlur stdDeviation="1.6"/></filter>
<filter id="b3" filterUnits="userSpaceOnUse" x="0" y="170" width="1203" height="800"><feGaussianBlur stdDeviation="3"/></filter>
<filter id="b6" filterUnits="userSpaceOnUse" x="0" y="170" width="1203" height="800"><feGaussianBlur stdDeviation="6"/></filter>
<filter id="b12" filterUnits="userSpaceOnUse" x="0" y="170" width="1203" height="800"><feGaussianBlur stdDeviation="12"/></filter>
<filter id="b20" filterUnits="userSpaceOnUse" x="0" y="170" width="1203" height="800"><feGaussianBlur stdDeviation="20"/></filter>
<linearGradient id="gFront" gradientUnits="userSpaceOnUse" x1="340" y1="480" x2="560" y2="850">
<stop offset="0" stop-color="#7c7b76"/><stop offset="0.45" stop-color="#706f6a"/><stop offset="1" stop-color="#605f5a"/></linearGradient>
<linearGradient id="gRight" gradientUnits="userSpaceOnUse" x1="600" y1="560" x2="760" y2="800">
<stop offset="0" stop-color="#5b5750"/><stop offset="1" stop-color="#524f49"/></linearGradient>
<linearGradient id="gTop" gradientUnits="userSpaceOnUse" x1="420" y1="380" x2="640" y2="600">
<stop offset="0" stop-color="#6c685f"/><stop offset="1" stop-color="#767166"/></linearGradient>
<linearGradient id="gRidge" gradientUnits="userSpaceOnUse" x1="856" y1="360" x2="590" y2="566">
<stop offset="0" stop-color="#aaa394" stop-opacity=".9"/><stop offset=".4" stop-color="#b0a998" stop-opacity="1"/><stop offset=".75" stop-color="#a59f90" stop-opacity=".75"/><stop offset="1" stop-color="#a09a8c" stop-opacity="0"/></linearGradient>
<linearGradient id="gEar" gradientUnits="userSpaceOnUse" x1="642" y1="250" x2="470" y2="410">
<stop offset="0" stop-color="#9f998c" stop-opacity=".9"/><stop offset=".55" stop-color="#a09a8d" stop-opacity=".95"/><stop offset="1" stop-color="#9a9588" stop-opacity="0"/></linearGradient>
<linearGradient id="gTFW" gradientUnits="userSpaceOnUse" x1="350" y1="440" x2="600" y2="580">
<stop offset="0" stop-color="#9d978a" stop-opacity=".55"/><stop offset=".35" stop-color="#9d978a" stop-opacity=".8"/><stop offset=".8" stop-color="#9d978a" stop-opacity=".75"/><stop offset="1" stop-color="#9d978a" stop-opacity=".4"/></linearGradient>
<linearGradient id="gNose" gradientUnits="userSpaceOnUse" x1="400" y1="642" x2="445" y2="678">
<stop offset="0" stop-color="#8c877b"/><stop offset=".55" stop-color="#837e73"/><stop offset="1" stop-color="#a8a294"/></linearGradient>
<linearGradient id="gNoseF" gradientUnits="userSpaceOnUse" x1="388" y1="670" x2="432" y2="700">
<stop offset="0" stop-color="#6f6f6a"/><stop offset=".5" stop-color="#82827d"/><stop offset="1" stop-color="#75756f"/></linearGradient>
<linearGradient id="gEyeT" gradientUnits="userSpaceOnUse" x1="0" y1="0" x2="1" y2="1"><stop offset="0" stop-color="#8c887c"/><stop offset="1" stop-color="#8c887c"/></linearGradient>
</defs>
<!-- grid -->
<path d="M-10.0 172.0L1213.0 -535.7M-10.0 203.9L1213.0 -503.7M-10.0 235.8L1213.0 -471.8M-10.0 267.8L1213.0 -439.9M-10.0 331.7L1213.0 -376.0M-10.0 363.6L1213.0 -344.0M-10.0 960.1L1213.0 1667.7M-10.0 395.5L1213.0 -312.1M-10.0 928.1L1213.0 1635.8M-10.0 427.5L1213.0 -280.2M-10.0 864.2L1213.0 1571.9M-10.0 491.4L1213.0 -216.3M-10.0 832.3L1213.0 1539.9M-10.0 523.3L1213.0 -184.3M-10.0 800.4L1213.0 1508.0M-10.0 555.2L1213.0 -152.4M-10.0 768.4L1213.0 1476.1M-10.0 587.2L1213.0 -120.5M-10.0 704.5L1213.0 1412.2M-10.0 651.1L1213.0 -56.6M-10.0 672.6L1213.0 1380.2M-10.0 683.0L1213.0 -24.6M-10.0 640.7L1213.0 1348.3M-10.0 714.9L1213.0 7.3M-10.0 608.7L1213.0 1316.4M-10.0 746.9L1213.0 39.2M-10.0 544.8L1213.0 1252.5M-10.0 810.8L1213.0 103.1M-10.0 512.9L1213.0 1220.5M-10.0 842.7L1213.0 135.1M-10.0 481.0L1213.0 1188.6M-10.0 874.6L1213.0 167.0M-10.0 449.0L1213.0 1156.7M-10.0 906.6L1213.0 198.9M-10.0 385.1L1213.0 1092.8M-10.0 970.5L1213.0 262.8M-10.0 353.2L1213.0 1060.8M-10.0 1002.4L1213.0 294.8M-10.0 321.3L1213.0 1028.9M-10.0 1034.3L1213.0 326.7M-10.0 289.3L1213.0 997.0M-10.0 1066.3L1213.0 358.6M-10.0 225.4L1213.0 933.1M-10.0 1130.2L1213.0 422.5M-10.0 193.5L1213.0 901.1M-10.0 1162.1L1213.0 454.5M-10.0 161.6L1213.0 869.2M-10.0 1194.0L1213.0 486.4M-10.0 129.6L1213.0 837.3M-10.0 1226.0L1213.0 518.3M-10.0 65.7L1213.0 773.4M-10.0 1289.9L1213.0 582.2M-10.0 33.8L1213.0 741.4M-10.0 1321.8L1213.0 614.2M-10.0 1.9L1213.0 709.5M-10.0 1353.7L1213.0 646.1M-10.0 -30.1L1213.0 677.6M-10.0 1385.7L1213.0 678.0M-10.0 -94.0L1213.0 613.7M-10.0 1449.6L1213.0 741.9M-10.0 -125.9L1213.0 581.7M-10.0 1481.5L1213.0 773.9M-10.0 -157.8L1213.0 549.8M-10.0 1513.4L1213.0 805.8M-10.0 -189.8L1213.0 517.9M-10.0 1545.4L1213.0 837.7M-10.0 -253.7L1213.0 454.0M-10.0 1609.3L1213.0 901.6M-10.0 -285.6L1213.0 422.0M-10.0 1641.2L1213.0 933.6M-10.0 -317.5L1213.0 390.1M-10.0 1673.1L1213.0 965.5M-10.0 -349.5L1213.0 358.2M-10.0 -413.4L1213.0 294.3M-10.0 -445.3L1213.0 262.3M-10.0 -477.2L1213.0 230.4M-10.0 -509.2L1213.0 198.5" stroke="#ebebeb" stroke-width="1.1" fill="none"/>
<path d="M-10.0 299.7L1213.0 -407.9M-10.0 896.2L1213.0 1603.8M-10.0 459.4L1213.0 -248.2M-10.0 736.5L1213.0 1444.1M-10.0 619.1L1213.0 -88.5M-10.0 576.8L1213.0 1284.4M-10.0 778.8L1213.0 71.2M-10.0 257.4L1213.0 965.0M-10.0 1098.2L1213.0 390.6M-10.0 97.7L1213.0 805.3M-10.0 1257.9L1213.0 550.3M-10.0 -62.0L1213.0 645.6M-10.0 1417.6L1213.0 710.0M-10.0 -221.7L1213.0 485.9M-10.0 1577.3L1213.0 869.7M-10.0 -381.4L1213.0 326.2M-10.0 -541.1L1213.0 166.5" stroke="#cbcbcb" stroke-width="1.15" fill="none"/>
<line x1="-10" y1="417.1" x2="1213" y2="1124.7" stroke="#ff8e8e" stroke-width="1.05"/>
<line x1="-10" y1="938.5" x2="1213" y2="230.9" stroke="#86ee86" stroke-width="1.05"/>
<!-- shadow -->
<path d="M815.0 711.0 L856.8 710.8 L873.7 717.8 L878.0 727.7 L870.9 740.4 L842.7 760.2 L786.0 794.0 L729.6 826.6 L673.0 859.0 L630.7 883.0 L602.4 894.5 L577.0 896.5 L554.4 890.8 L523.3 876.7 L509.2 880.9 L461.1 856.9 L435.7 865.3 L389.0 838.5 L407.4 827.2 L353.7 794.7 L339.6 773.5 L333.9 756.5 L335.3 745.0 L400.0 700.0 L700.0 600.0Z" fill="#000" opacity="0.21" filter="url(#b2)" stroke="#000" stroke-width="2" stroke-linejoin="round"/>
<!-- model -->
<g id="model">
<path d="M641.1 225.5 C643.9 225.3 646.3 225.7 648.4 226.8 C650.5 227.9 652.3 230.0 653.9 231.9 C655.5 233.8 656.6 235.0 657.8 238.0 C659.0 241.0 660.1 245.5 661.0 250.0 C661.9 254.5 662.4 259.4 663.0 264.9 C663.6 270.4 664.0 276.9 664.5 283.0 C665.0 289.1 665.3 295.2 665.7 301.4 C666.1 307.6 666.5 313.9 666.8 320.0 C667.1 326.1 667.3 332.7 667.7 338.0 C668.1 343.3 668.6 347.3 669.2 352.0 C669.8 356.7 670.2 360.7 671.3 366.0 C672.4 371.3 673.7 378.6 675.7 384.0 C677.7 389.4 680.2 394.5 683.2 398.4 C686.2 402.3 689.3 405.6 694.0 407.6 C698.7 409.7 704.1 411.0 711.3 410.7 C718.5 410.4 727.6 409.0 737.3 405.9 C747.0 402.8 757.1 397.7 769.7 391.9 C782.3 386.1 800.3 376.6 812.9 371.3 C825.5 366.0 837.5 362.4 845.3 360.1 C853.1 357.8 855.8 357.7 859.6 357.4 C863.4 357.1 866.2 357.7 868.1 358.3 C870.0 358.9 870.0 360.0 871.0 361.0 C872.0 362.0 873.0 362.8 874.0 364.5 C875.0 366.2 876.5 368.1 877.2 371.0 C877.9 373.9 878.4 377.7 878.4 382.1 C878.4 386.5 877.8 392.2 877.2 397.3 C876.6 402.4 876.0 407.0 875.0 412.4 C874.0 417.8 872.7 423.2 871.0 429.7 C869.3 436.2 866.9 444.1 864.8 451.3 C862.7 458.5 861.2 464.4 858.6 472.9 C856.0 481.3 853.0 491.0 849.2 502.0 C845.4 513.0 839.1 527.1 835.6 538.9 C832.1 550.7 830.2 562.9 828.5 572.8 C826.8 582.7 826.0 588.4 825.1 598.3 C824.2 608.2 823.7 621.9 823.4 632.2 C823.1 642.5 823.5 651.4 823.5 660.0 C823.5 668.6 823.6 677.2 823.3 684.0 C822.9 690.8 822.6 694.8 821.4 700.9 C820.1 707.0 818.4 714.1 815.8 720.7 C813.2 727.3 810.4 734.0 805.9 740.4 C801.4 746.8 795.0 753.6 788.9 758.8 C782.8 764.0 779.1 765.6 769.2 771.5 C759.3 777.4 743.3 786.4 729.6 794.2 C715.9 802.0 701.3 810.4 687.2 818.2 C673.1 826.0 656.6 834.7 644.8 840.8 C633.0 846.9 624.5 851.4 616.5 854.9 C608.5 858.4 603.0 860.5 596.7 862.0 C590.5 863.5 585.6 864.6 579.0 864.0 C572.4 863.4 564.6 861.0 556.8 858.1 C548.9 855.2 542.3 852.1 531.9 846.9 C521.5 841.7 509.0 835.0 494.5 826.9 C480.0 818.8 461.3 807.8 444.7 798.3 C428.1 788.8 407.3 776.9 394.8 769.6 C382.3 762.3 376.5 759.2 369.9 754.6 C363.2 750.0 359.3 747.2 354.9 742.2 C350.5 737.2 346.6 731.4 343.7 724.7 C340.8 718.1 339.0 711.4 337.5 702.3 C336.0 693.2 335.2 685.3 334.5 669.9 C333.8 654.5 333.6 629.1 333.4 609.6 C333.2 590.1 333.3 568.2 333.4 553.1 C333.5 538.0 333.4 528.5 333.9 519.1 C334.4 509.7 335.2 502.4 336.2 496.5 C337.2 490.6 338.7 487.6 340.0 483.8 C341.3 480.0 342.5 477.1 344.0 473.9 C345.5 470.7 347.6 467.6 348.9 464.8 C350.2 462.0 350.6 459.4 351.9 456.9 C353.2 454.4 354.7 452.5 356.9 449.9 C359.1 447.3 361.9 444.2 364.9 441.4 C367.9 438.6 371.6 435.6 374.9 433.0 C378.2 430.4 381.6 428.2 384.9 426.0 C388.2 423.8 390.6 422.5 394.8 420.0 C399.0 417.5 405.0 414.0 410.0 411.2 C415.0 408.4 419.2 406.4 424.7 403.2 C430.2 400.0 437.1 396.0 443.0 392.0 C448.9 388.0 454.1 383.6 460.0 379.2 C465.9 374.8 472.2 370.3 478.3 365.4 C484.4 360.5 490.5 355.4 496.6 349.9 C502.7 344.4 508.8 338.4 514.9 332.5 C521.0 326.6 527.1 320.3 533.2 314.2 C539.3 308.1 545.3 302.1 551.4 296.0 C557.5 289.9 563.6 283.6 569.7 277.7 C575.8 271.8 581.9 265.8 588.0 260.3 C594.1 254.8 600.8 249.1 606.3 244.7 C611.8 240.3 616.6 236.6 620.9 233.8 C625.2 231.0 628.5 229.1 631.9 227.7 C635.3 226.3 638.4 225.7 641.1 225.5Z" fill="#6a675f"/>
<path d="M348.9 464.8 C349.4 463.5 350.6 459.4 351.9 456.9 C353.2 454.4 354.7 452.5 356.9 449.9 C359.1 447.3 361.9 444.2 364.9 441.4 C367.9 438.6 371.6 435.6 374.9 433.0 C378.2 430.4 381.6 428.2 384.9 426.0 C388.2 423.8 390.6 422.5 394.8 420.0 C399.0 417.5 405.0 414.0 410.0 411.2 C415.0 408.4 419.2 406.4 424.7 403.2 C430.2 400.0 437.1 396.0 443.0 392.0 C448.9 388.0 454.1 383.6 460.0 379.2 C465.9 374.8 472.2 370.3 478.3 365.4 C484.4 360.5 490.5 355.4 496.6 349.9 C502.7 344.4 508.8 338.4 514.9 332.5 C521.0 326.6 527.1 320.3 533.2 314.2 C539.3 308.1 545.3 302.1 551.4 296.0 C557.5 289.9 563.6 283.6 569.7 277.7 C575.8 271.8 581.9 265.8 588.0 260.3 C594.1 254.8 600.8 249.1 606.3 244.7 C611.8 240.3 616.6 236.6 620.9 233.8 C625.2 231.0 628.5 229.1 631.9 227.7 C635.3 226.3 638.4 225.7 641.1 225.5 C643.9 225.3 646.3 225.7 648.4 226.8 C650.5 227.9 652.3 230.0 653.9 231.9 C655.5 233.8 656.6 235.0 657.8 238.0 C659.0 241.0 660.1 245.5 661.0 250.0 C661.9 254.5 662.4 259.4 663.0 264.9 C663.6 270.4 664.0 276.9 664.5 283.0 C665.0 289.1 665.3 295.2 665.7 301.4 C666.1 307.6 666.5 313.9 666.8 320.0 C667.1 326.1 667.3 332.7 667.7 338.0 C668.1 343.3 668.6 347.3 669.2 352.0 C669.8 356.7 670.2 360.7 671.3 366.0 C672.4 371.3 673.7 378.6 675.7 384.0 C677.7 389.4 680.2 394.5 683.2 398.4 C686.2 402.3 689.3 405.6 694.0 407.6 C698.7 409.7 704.1 411.0 711.3 410.7 C718.5 410.4 727.6 409.0 737.3 405.9 C747.0 402.8 757.1 397.7 769.7 391.9 C782.3 386.1 800.3 376.6 812.9 371.3 C825.5 366.0 837.5 362.4 845.3 360.1 C853.1 357.8 855.8 357.7 859.6 357.4 C863.4 357.1 866.2 357.7 868.1 358.3 C870.0 358.9 870.5 360.6 871.0 361.0 C867.7 364.2 857.1 373.8 851.1 380.0 C845.1 386.2 839.9 392.4 834.7 398.0 C829.5 403.6 824.7 408.5 819.7 413.7 C814.7 418.9 809.7 424.3 804.7 429.4 C799.7 434.5 794.8 439.3 789.8 444.3 C784.8 449.3 779.8 454.4 774.8 459.3 C769.8 464.2 764.9 468.8 759.9 473.5 C754.9 478.2 749.5 483.3 744.9 487.7 C740.3 492.1 737.0 495.4 732.2 499.7 C727.4 503.9 721.4 509.0 716.0 513.2 C710.6 517.4 707.4 519.7 699.7 524.7 C692.0 529.7 679.8 537.5 669.8 543.4 C659.8 549.3 649.9 554.2 639.9 559.9 C629.9 565.6 620.1 571.6 609.9 577.8 C599.6 584.0 583.6 594.0 578.4 597.3 C575.8 595.8 570.0 592.5 563.0 588.4 C556.0 584.3 545.3 577.7 536.4 572.5 C527.5 567.3 518.7 562.3 509.8 557.2 C500.9 552.1 492.1 547.0 483.2 541.9 C474.3 536.8 465.5 531.8 456.6 526.6 C447.7 521.5 438.6 516.0 430.0 511.0 C421.4 505.9 412.3 500.6 404.8 496.3 C397.3 492.0 391.5 488.8 384.9 485.0 C378.2 481.2 370.9 477.0 364.9 473.6 C358.9 470.2 351.6 466.3 348.9 464.8Z" fill="url(#gTop)"/>
<path d="M579.0 864.0 C575.3 863.0 564.6 861.0 556.8 858.1 C548.9 855.2 542.3 852.1 531.9 846.9 C521.5 841.7 509.0 835.0 494.5 826.9 C480.0 818.8 461.3 807.8 444.7 798.3 C428.1 788.8 407.3 776.9 394.8 769.6 C382.3 762.3 376.5 759.2 369.9 754.6 C363.2 750.0 359.3 747.2 354.9 742.2 C350.5 737.2 346.6 731.4 343.7 724.7 C340.8 718.1 339.0 711.4 337.5 702.3 C336.0 693.2 335.2 685.3 334.5 669.9 C333.8 654.5 333.6 629.1 333.4 609.6 C333.2 590.1 333.3 568.2 333.4 553.1 C333.5 538.0 333.4 528.5 333.9 519.1 C334.4 509.7 335.2 502.4 336.2 496.5 C337.2 490.6 338.7 487.6 340.0 483.8 C341.3 480.0 342.5 477.1 344.0 473.9 C345.5 470.7 348.1 466.3 348.9 464.8 C351.6 466.3 358.9 470.2 364.9 473.6 C370.9 477.0 378.2 481.2 384.9 485.0 C391.5 488.8 397.3 492.0 404.8 496.3 C412.3 500.6 421.4 505.9 430.0 511.0 C438.6 516.0 447.7 521.5 456.6 526.6 C465.5 531.8 474.3 536.8 483.2 541.9 C492.1 547.0 500.9 552.1 509.8 557.2 C518.7 562.3 527.5 567.3 536.4 572.5 C545.3 577.7 556.0 584.3 563.0 588.4 C570.0 592.5 575.8 595.8 578.4 597.3 L579 864Z" fill="url(#gFront)"/>
<path d="M871.0 361.0 C871.5 361.6 873.0 362.8 874.0 364.5 C875.0 366.2 876.5 368.1 877.2 371.0 C877.9 373.9 878.4 377.7 878.4 382.1 C878.4 386.5 877.8 392.2 877.2 397.3 C876.6 402.4 876.0 407.0 875.0 412.4 C874.0 417.8 872.7 423.2 871.0 429.7 C869.3 436.2 866.9 444.1 864.8 451.3 C862.7 458.5 861.2 464.4 858.6 472.9 C856.0 481.3 853.0 491.0 849.2 502.0 C845.4 513.0 839.1 527.1 835.6 538.9 C832.1 550.7 830.2 562.9 828.5 572.8 C826.8 582.7 826.0 588.4 825.1 598.3 C824.2 608.2 823.7 621.9 823.4 632.2 C823.1 642.5 823.5 651.4 823.5 660.0 C823.5 668.6 823.6 677.2 823.3 684.0 C822.9 690.8 822.6 694.8 821.4 700.9 C820.1 707.0 818.4 714.1 815.8 720.7 C813.2 727.3 810.4 734.0 805.9 740.4 C801.4 746.8 795.0 753.6 788.9 758.8 C782.8 764.0 779.1 765.6 769.2 771.5 C759.3 777.4 743.3 786.4 729.6 794.2 C715.9 802.0 701.3 810.4 687.2 818.2 C673.1 826.0 656.6 834.7 644.8 840.8 C633.0 846.9 624.5 851.4 616.5 854.9 C608.5 858.4 603.0 860.5 596.7 862.0 C590.5 863.5 582.0 863.7 579.0 864.0 L578.4 597.3 C583.6 594.0 599.6 584.0 609.9 577.8 C620.1 571.6 629.9 565.6 639.9 559.9 C649.9 554.2 659.8 549.3 669.8 543.4 C679.8 537.5 692.0 529.7 699.7 524.7 C707.4 519.7 710.6 517.4 716.0 513.2 C721.4 509.0 727.4 503.9 732.2 499.7 C737.0 495.4 740.3 492.1 744.9 487.7 C749.5 483.3 754.9 478.2 759.9 473.5 C764.9 468.8 769.8 464.2 774.8 459.3 C779.8 454.4 784.8 449.3 789.8 444.3 C794.8 439.3 799.7 434.5 804.7 429.4 C809.7 424.3 814.7 418.9 819.7 413.7 C824.7 408.5 829.5 403.6 834.7 398.0 C839.9 392.4 845.1 386.2 851.1 380.0 C857.1 373.8 867.7 364.2 871.0 361.0Z" fill="url(#gRight)"/>
<g clip-path="url(#cTop)">
<rect x="320" y="200" width="600" height="420" fill="#777268"/>
<!-- dark centre -->
<ellipse cx="650" cy="488" rx="74" ry="36" fill="#67635a" filter="url(#b20)" opacity=".9" transform="rotate(-28 650 488)"/>
<!-- left ear light band -->
<path d="M642 250 C628 300 590 345 548 372 C520 392 490 402 470 410" stroke="url(#gEar)" stroke-width="42" fill="none" filter="url(#b12)"/>
<!-- darker band inside left outline -->
<path d="M372 452 C400 432 440 410 470 388 C520 348 575 290 618 250" stroke="#6c685e" stroke-width="12" fill="none" filter="url(#b6)" opacity=".7"/>
<!-- thin light rim at left outline -->
<path d="M352 462 C380 436 430 405 468 378 C520 338 590 262 636 228" stroke="#8f8e87" stroke-width="5" fill="none" filter="url(#b1)" opacity=".8"/>
<!-- left ear right side darker -->
<path d="M653 238 C655 300 653 350 664 392" stroke="#6a665c" stroke-width="12" fill="none" filter="url(#b3)" opacity=".9"/>
<!-- valley gray-green -->
<path d="M684 398 C700 428 740 425 810 392" stroke="#8b8d86" stroke-width="20" fill="none" filter="url(#b6)" opacity=".85"/>
<path d="M657.8 238.0 C658.3 240.0 660.1 245.5 661.0 250.0 C661.9 254.5 662.4 259.4 663.0 264.9 C663.6 270.4 664.0 276.9 664.5 283.0 C665.0 289.1 665.3 295.2 665.7 301.4 C666.1 307.6 666.5 313.9 666.8 320.0 C667.1 326.1 667.3 332.7 667.7 338.0 C668.1 343.3 668.6 347.3 669.2 352.0 C669.8 356.7 670.2 360.7 671.3 366.0 C672.4 371.3 673.7 378.6 675.7 384.0 C677.7 389.4 680.2 394.5 683.2 398.4 C686.2 402.3 689.3 405.6 694.0 407.6 C698.7 409.7 704.1 411.0 711.3 410.7 C718.5 410.4 733.0 406.7 737.3 405.9" stroke="#8c8e87" stroke-width="12" fill="none" filter="url(#b1)"/>
<!-- right ear ridge highlight -->
<path d="M863.4 353.0 C860.0 356.3 849.4 366.1 843.2 372.3 C837.1 378.5 831.9 384.9 826.7 390.5 C821.4 396.1 816.7 400.9 811.7 406.1 C806.8 411.3 801.8 416.6 796.8 421.7 C791.9 426.8 787.0 431.6 782.0 436.5 C777.1 441.5 772.1 446.6 767.1 451.4 C762.2 456.3 757.3 460.8 752.3 465.5 C747.4 470.2 741.9 475.4 737.3 479.7 C732.8 484.0 729.6 487.3 724.9 491.5 C720.2 495.6 714.5 500.5 709.3 504.5 C704.1 508.5 701.2 510.6 693.7 515.5 C686.2 520.4 674.1 528.1 664.2 533.9 C654.3 539.7 644.4 544.6 634.4 550.4 C624.4 556.1 614.5 562.1 604.2 568.4 C593.9 574.7 577.9 584.7 572.6 587.9" stroke="url(#gRidge)" stroke-width="20" fill="none" filter="url(#b6)"/>
<!-- band along front-top edge -->
<path d="M593.4 571.3 C590.9 569.9 585.2 566.7 578.3 562.6 C571.3 558.5 560.5 551.9 551.6 546.6 C542.7 541.4 533.7 536.3 524.8 531.2 C515.9 526.1 507.0 521.0 498.2 515.9 C489.3 510.8 480.5 505.8 471.7 500.7 C462.8 495.5 453.8 490.2 445.1 485.1 C436.5 480.0 427.4 474.7 419.8 470.3 C412.2 465.9 406.4 462.7 399.7 458.9 C393.0 455.1 385.6 450.8 379.6 447.4 C373.5 444.0 366.1 440.0 363.4 438.5" stroke="url(#gTFW)" stroke-width="48" fill="none" filter="url(#b12)"/>
<path d="M584.9 586.0 C582.4 584.6 576.6 581.3 569.6 577.2 C562.6 573.1 551.9 566.5 543.0 561.3 C534.1 556.1 525.2 551.0 516.3 545.9 C507.4 540.8 498.5 535.7 489.7 530.6 C480.8 525.5 472.0 520.5 463.1 515.4 C454.3 510.2 445.2 504.8 436.6 499.8 C427.9 494.7 418.8 489.4 411.3 485.0 C403.8 480.7 398.0 477.5 391.3 473.7 C384.7 469.9 377.3 465.6 371.3 462.3 C365.2 458.9 357.8 454.9 355.2 453.4" stroke="#a7a193" stroke-width="22" fill="none" filter="url(#b6)" opacity=".7"/>
<ellipse cx="410" cy="462" rx="46" ry="12" fill="#a39d8f" filter="url(#b12)" opacity=".45" transform="rotate(-12 410 462)"/>
<!-- thin darker line above front-top edge -->
<path d="M578.4 597.3 C575.8 595.8 570.0 592.5 563.0 588.4 C556.0 584.3 545.3 577.7 536.4 572.5 C527.5 567.3 518.7 562.3 509.8 557.2 C500.9 552.1 492.1 547.0 483.2 541.9 C474.3 536.8 465.5 531.8 456.6 526.6 C447.7 521.5 438.6 516.0 430.0 511.0 C421.4 505.9 412.3 500.6 404.8 496.3 C397.3 492.0 391.5 488.8 384.9 485.0 C378.2 481.2 370.9 477.0 364.9 473.6 C358.9 470.2 351.6 466.3 348.9 464.8" stroke="#6e6a60" stroke-width="5" fill="none" filter="url(#b1)" opacity=".55"/>
<!-- specular -->
<ellipse cx="575" cy="584" rx="16" ry="9" fill="#d8d4c8" filter="url(#b6)" opacity=".8" transform="rotate(28 575 584)"/>
<ellipse cx="576.3" cy="584.2" rx="6" ry="4.6" fill="#fff" filter="url(#b3)"/>
</g>
<g clip-path="url(#cFront)">
<!-- dark band under top edge -->
<path d="M576.9 599.9 C574.3 598.4 568.5 595.1 561.5 591.0 C554.5 586.8 543.7 580.3 534.9 575.1 C526.0 569.9 517.2 564.9 508.3 559.8 C499.4 554.7 490.6 549.6 481.7 544.5 C472.8 539.4 464.0 534.3 455.1 529.2 C446.2 524.0 437.1 518.6 428.5 513.6 C419.9 508.5 410.8 503.2 403.3 498.9 C395.8 494.6 390.1 491.4 383.4 487.6 C376.8 483.8 369.4 479.6 363.4 476.2 C357.4 472.9 350.1 468.9 347.5 467.4" stroke="#62615c" stroke-width="6" fill="none" filter="url(#b1)" opacity=".7"/>
<!-- light band below -->
<path d="M567.4 616.3 C564.8 614.8 558.8 611.5 551.8 607.3 C544.8 603.2 534.1 596.7 525.3 591.5 C516.4 586.3 507.7 581.4 498.8 576.3 C490.0 571.2 481.1 566.1 472.2 561.0 C463.4 555.9 454.4 550.8 445.6 545.6 C436.7 540.5 427.5 535.0 418.9 530.0 C410.3 524.9 401.3 519.7 393.8 515.4 C386.3 511.0 380.6 507.9 374.0 504.1 C367.4 500.4 360.1 496.1 354.1 492.8 C348.2 489.4 340.9 485.5 338.3 484.1" stroke="#8d8d87" stroke-width="30" fill="none" filter="url(#b6)" opacity=".75"/>
<path d="M571.9 608.6 C569.3 607.1 563.4 603.7 556.4 599.6 C549.4 595.5 538.7 588.9 529.8 583.7 C521.0 578.5 512.2 573.6 503.3 568.5 C494.5 563.4 485.6 558.3 476.7 553.2 C467.8 548.1 459.0 543.0 450.1 537.8 C441.2 532.7 432.1 527.3 423.4 522.2 C414.8 517.2 405.8 511.9 398.3 507.6 C390.8 503.2 385.1 500.1 378.5 496.3 C371.8 492.5 364.5 488.3 358.5 484.9 C352.6 481.6 345.3 477.6 342.6 476.2" stroke="#999994" stroke-width="10" fill="none" filter="url(#b3)" opacity=".6"/>
<!-- left rim light -->
<path d="M353 490 C348 540 348 590 350 630" stroke="#8b8b85" stroke-width="16" fill="none" filter="url(#b6)" opacity=".6"/>
<!-- near vertical edge light at top -->
<path d="M560 612 L563 690" stroke="#8c8c86" stroke-width="26" fill="none" filter="url(#b12)" opacity=".55"/>
<!-- bottom darker -->
<path d="M350 750 C420 795 500 838 578 870" stroke="#4f4e4a" stroke-width="34" fill="none" filter="url(#b12)" opacity=".35"/>
</g>
<g clip-path="url(#cRight)">
<!-- light band below ridge -->
<path d="M881.4 371.8 C878.1 375.0 867.8 384.4 861.8 390.5 C855.9 396.6 850.9 402.6 845.7 408.2 C840.5 413.8 835.6 418.8 830.5 424.1 C825.5 429.3 820.5 434.7 815.4 439.9 C810.4 445.0 805.4 449.9 800.4 454.9 C795.4 459.9 790.3 465.1 785.3 470.0 C780.3 474.9 775.2 479.6 770.2 484.4 C765.2 489.1 759.9 494.2 755.2 498.6 C750.5 503.0 747.1 506.5 742.1 510.9 C737.1 515.4 730.8 520.7 725.1 525.1 C719.4 529.5 715.9 532.0 707.9 537.3 C700.0 542.5 687.5 550.4 677.4 556.3 C667.3 562.3 657.3 567.2 647.4 572.9 C637.4 578.6 627.9 584.4 617.7 590.6 C607.5 596.8 591.5 606.8 586.3 610.1" stroke="#73726d" stroke-width="16" fill="none" filter="url(#b6)" opacity=".5"/>
<path d="M872.7 362.8 C869.4 366.0 858.9 375.6 852.9 381.8 C846.9 387.9 841.8 394.1 836.5 399.7 C831.3 405.3 826.5 410.2 821.5 415.4 C816.5 420.7 811.5 426.0 806.5 431.1 C801.5 436.3 796.6 441.1 791.6 446.1 C786.6 451.1 781.5 456.2 776.5 461.1 C771.6 466.0 766.6 470.6 761.6 475.3 C756.6 480.1 751.2 485.1 746.6 489.5 C742.0 493.9 738.7 497.3 733.9 501.6 C729.0 505.9 723.0 511.0 717.5 515.2 C712.1 519.4 708.8 521.7 701.1 526.8 C693.3 531.9 681.1 539.7 671.1 545.6 C661.1 551.4 651.1 556.3 641.1 562.1 C631.2 567.8 621.4 573.7 611.2 579.9 C601.0 586.2 585.0 596.2 579.7 599.4" stroke="#5a5750" stroke-width="4.5" fill="none" filter="url(#b1)" opacity=".9"/>
<path d="M877.2 367.5 C873.9 370.6 863.5 380.2 857.5 386.3 C851.5 392.4 846.5 398.5 841.3 404.1 C836.1 409.7 831.2 414.7 826.2 419.9 C821.2 425.2 816.1 430.6 811.1 435.7 C806.1 440.8 801.2 445.7 796.2 450.7 C791.2 455.7 786.1 460.8 781.1 465.7 C776.1 470.6 771.1 475.3 766.1 480.0 C761.1 484.8 755.7 489.8 751.1 494.2 C746.4 498.6 743.1 502.1 738.2 506.4 C733.2 510.8 727.1 516.0 721.5 520.3 C715.9 524.6 712.5 527.1 704.6 532.2 C696.8 537.4 684.4 545.2 674.4 551.2 C664.3 557.1 654.3 562.0 644.4 567.7 C634.4 573.4 624.8 579.3 614.6 585.5 C604.4 591.7 588.4 601.7 583.1 605.0" stroke="#8e908b" stroke-width="8" fill="none" filter="url(#b3)" opacity=".95"/>
<!-- bright near corner -->
<ellipse cx="594" cy="612" rx="14" ry="10" fill="#b9b7ae" filter="url(#b6)" opacity=".9"/>
<!-- strip along vertical edge -->
<path d="M586 618 L587 690" stroke="#74736d" stroke-width="10" fill="none" filter="url(#b6)" opacity=".55"/>
<!-- fin lighter -->
<path d="M866 420 C850 470 835 530 828 600 C826 650 828 700 815 730" stroke="#6b6861" stroke-width="18" fill="none" filter="url(#b6)" opacity=".8"/>
</g>
<clipPath id="cBelow"><path d="M325 610.4 L579 757.3 L835 609.2 L835 900 L325 900Z"/></clipPath>
<g clip-path="url(#cSil)"><g clip-path="url(#cBelow)">
<path d="M-10.0 172.0L1213.0 -535.7M-10.0 203.9L1213.0 -503.7M-10.0 235.8L1213.0 -471.8M-10.0 267.8L1213.0 -439.9M-10.0 331.7L1213.0 -376.0M-10.0 363.6L1213.0 -344.0M-10.0 960.1L1213.0 1667.7M-10.0 395.5L1213.0 -312.1M-10.0 928.1L1213.0 1635.8M-10.0 427.5L1213.0 -280.2M-10.0 864.2L1213.0 1571.9M-10.0 491.4L1213.0 -216.3M-10.0 832.3L1213.0 1539.9M-10.0 523.3L1213.0 -184.3M-10.0 800.4L1213.0 1508.0M-10.0 555.2L1213.0 -152.4M-10.0 768.4L1213.0 1476.1M-10.0 587.2L1213.0 -120.5M-10.0 704.5L1213.0 1412.2M-10.0 651.1L1213.0 -56.6M-10.0 672.6L1213.0 1380.2M-10.0 683.0L1213.0 -24.6M-10.0 640.7L1213.0 1348.3M-10.0 714.9L1213.0 7.3M-10.0 608.7L1213.0 1316.4M-10.0 746.9L1213.0 39.2M-10.0 544.8L1213.0 1252.5M-10.0 810.8L1213.0 103.1M-10.0 512.9L1213.0 1220.5M-10.0 842.7L1213.0 135.1M-10.0 481.0L1213.0 1188.6M-10.0 874.6L1213.0 167.0M-10.0 449.0L1213.0 1156.7M-10.0 906.6L1213.0 198.9M-10.0 385.1L1213.0 1092.8M-10.0 970.5L1213.0 262.8M-10.0 353.2L1213.0 1060.8M-10.0 1002.4L1213.0 294.8M-10.0 321.3L1213.0 1028.9M-10.0 1034.3L1213.0 326.7M-10.0 289.3L1213.0 997.0M-10.0 1066.3L1213.0 358.6M-10.0 225.4L1213.0 933.1M-10.0 1130.2L1213.0 422.5M-10.0 193.5L1213.0 901.1M-10.0 1162.1L1213.0 454.5M-10.0 161.6L1213.0 869.2M-10.0 1194.0L1213.0 486.4M-10.0 129.6L1213.0 837.3M-10.0 1226.0L1213.0 518.3M-10.0 65.7L1213.0 773.4M-10.0 1289.9L1213.0 582.2M-10.0 33.8L1213.0 741.4M-10.0 1321.8L1213.0 614.2M-10.0 1.9L1213.0 709.5M-10.0 1353.7L1213.0 646.1M-10.0 -30.1L1213.0 677.6M-10.0 1385.7L1213.0 678.0M-10.0 -94.0L1213.0 613.7M-10.0 1449.6L1213.0 741.9M-10.0 -125.9L1213.0 581.7M-10.0 1481.5L1213.0 773.9M-10.0 -157.8L1213.0 549.8M-10.0 1513.4L1213.0 805.8M-10.0 -189.8L1213.0 517.9M-10.0 1545.4L1213.0 837.7M-10.0 -253.7L1213.0 454.0M-10.0 1609.3L1213.0 901.6M-10.0 -285.6L1213.0 422.0M-10.0 1641.2L1213.0 933.6M-10.0 -317.5L1213.0 390.1M-10.0 1673.1L1213.0 965.5M-10.0 -349.5L1213.0 358.2M-10.0 -413.4L1213.0 294.3M-10.0 -445.3L1213.0 262.3M-10.0 -477.2L1213.0 230.4M-10.0 -509.2L1213.0 198.5" stroke="#fff" stroke-opacity=".05" stroke-width="1" fill="none"/>
<path d="M-10.0 299.7L1213.0 -407.9M-10.0 896.2L1213.0 1603.8M-10.0 459.4L1213.0 -248.2M-10.0 736.5L1213.0 1444.1M-10.0 619.1L1213.0 -88.5M-10.0 576.8L1213.0 1284.4M-10.0 778.8L1213.0 71.2M-10.0 257.4L1213.0 965.0M-10.0 1098.2L1213.0 390.6M-10.0 97.7L1213.0 805.3M-10.0 1257.9L1213.0 550.3M-10.0 -62.0L1213.0 645.6M-10.0 1417.6L1213.0 710.0M-10.0 -221.7L1213.0 485.9M-10.0 1577.3L1213.0 869.7M-10.0 -381.4L1213.0 326.2M-10.0 -541.1L1213.0 166.5" stroke="#fff" stroke-opacity=".10" stroke-width="1" fill="none"/>
</g>
<line x1="320" y1="608.0" x2="840" y2="908.9" stroke="#d63a3a" stroke-opacity=".85" stroke-width="1.25"/>
<line x1="320" y1="747.6" x2="440.6" y2="677.3" stroke="#3fd23f" stroke-opacity=".9" stroke-width="1.3"/>
</g>
<!--SHADING_END-->
<path d="M871.0 361.0 C867.7 364.2 857.1 373.8 851.1 380.0 C845.1 386.2 839.9 392.4 834.7 398.0 C829.5 403.6 824.7 408.5 819.7 413.7 C814.7 418.9 809.7 424.3 804.7 429.4 C799.7 434.5 794.8 439.3 789.8 444.3 C784.8 449.3 779.8 454.4 774.8 459.3 C769.8 464.2 764.9 468.8 759.9 473.5 C754.9 478.2 749.5 483.3 744.9 487.7 C740.3 492.1 737.0 495.4 732.2 499.7 C727.4 503.9 721.4 509.0 716.0 513.2 C710.6 517.4 707.4 519.7 699.7 524.7 C692.0 529.7 679.8 537.5 669.8 543.4 C659.8 549.3 649.9 554.2 639.9 559.9 C629.9 565.6 620.1 571.6 609.9 577.8 C599.6 584.0 583.6 594.0 578.4 597.3" stroke="#15140f" stroke-width="1.2" fill="none"/>
<path d="M578.4 597.3 C575.8 595.8 570.0 592.5 563.0 588.4 C556.0 584.3 545.3 577.7 536.4 572.5 C527.5 567.3 518.7 562.3 509.8 557.2 C500.9 552.1 492.1 547.0 483.2 541.9 C474.3 536.8 465.5 531.8 456.6 526.6 C447.7 521.5 438.6 516.0 430.0 511.0 C421.4 505.9 412.3 500.6 404.8 496.3 C397.3 492.0 391.5 488.8 384.9 485.0 C378.2 481.2 370.9 477.0 364.9 473.6 C358.9 470.2 351.6 466.3 348.9 464.8" stroke="#15140f" stroke-width="1.2" fill="none"/>
<path d="M578.4 597.3 L579.3 864" stroke="#15140f" stroke-width="1.2" fill="none"/>
<g stroke="#191814" stroke-width="1.1" stroke-linejoin="round" stroke-linecap="round">
<!-- left eye -->
<path d="M352.6 516 L353 513 L360.5 508.4 Q362 507.6 364 508.6 L394.5 527.4 L398 531.5 L387.2 536 Z" fill="#8c887c"/>
<path d="M387.4 534.5 L398 531.8 L398 552.7 Q398 554 396.5 554.8 L390 557.9 L387.4 556.9 Z" fill="#5b5953"/>
<path d="M354.3 515 L385.4 532.6 Q387.4 533.8 387.4 536 L387.4 554.4 Q387.4 557.6 384.6 556 L354.6 538 Q352.3 536.6 352.2 534 L351.8 517 Q351.8 513.6 354.3 515Z" fill="#797974"/>
<!-- right eye -->
<path d="M467.2 581.6 L467.4 578.6 L475.1 574 Q476.8 573.2 478.6 574.2 L508.2 592.2 L511.7 596 L500.8 601.4 Z" fill="#8c887c"/>
<path d="M501.1 599.8 L511.7 596.3 L511.7 623 Q511.7 624.8 510 625.8 L503.5 630.1 L501.1 629 Z" fill="#5b5953"/>
<path d="M468.8 580.6 L499 597.9 Q501.1 599.1 501.1 601.6 L501.1 626.2 Q501.1 629.6 498.2 627.9 L468.8 610 Q466.4 608.5 466.4 605.8 L466.4 582.4 Q466.4 579.2 468.8 580.6Z" fill="#777772"/>
<!-- nose -->
<path d="M433.6 680.5 L461.6 666.8 Q463.4 668.5 462.5 670.5 C459 677 447 688 444.8 691.1 C442.5 696 443.5 702 442.9 706 C441 710 433 717 428.6 719.8 L420.5 724.1 L424 700Z" fill="#5f5e59"/>
<path d="M433.6 680.5 L461.6 666.8 Q463.4 668.5 462.5 670.5 C459 677 447 688 444.8 691.1 C441 692 436 690 433.6 687.3Z" fill="#86857f" stroke="none"/>
<path d="M437.3 698.6 L442.9 706.7 M428.6 706 L427.4 717.3" fill="none" stroke-width="1"/>
<path d="M386.8 655.5 C385.3 658 385.2 660 385.6 662.4 C386.5 668 392 686 394.9 694.8 C396.5 701 398 708 399.9 712.3 C403 720 411 727 416.8 727.2 C419 727 420.2 726 420.5 724.1 C421 721 420.5 718 421.1 714.8 C422 711 423 707.5 424.9 704.8 C427 702 430 699 431.1 696.1 C433 693 433.5 690 433.6 687.3 L433.6 680.5 Z" fill="url(#gNoseF)"/>
<path d="M386.8 655.5 C387.5 652.5 389 650.5 391.2 649.3 L409.9 638.1 Q414.5 636.2 419.9 639.3 L457.3 661.2 Q460.5 663.5 461.6 666.8 L433.6 680.5 Z" fill="url(#gNose)"/>
<ellipse cx="435" cy="677.6" rx="4" ry="2.2" fill="#dcd8cc" filter="url(#b1)" stroke="none" opacity=".9" transform="rotate(-25 435 677.6)"/>
<!-- mouth -->
<path d="M371.3 731.5 L376.1 724.2 Q377.5 723.4 379 724.2 Q433.5 761.5 494.5 790.8 L485.8 796.3 Q426 768.2 373 733 Z" fill="#8e897d"/>
<path d="M485.8 796 L494.5 790.8 L502 797 L501.5 812 L493.3 817 L486.5 815.7Z" fill="#787771" stroke-width=".8" stroke="#4a4944"/>
<path d="M373.4 733.4 Q426 768.4 483.6 794.4 Q485.8 795.8 485.9 798.4 L486.4 813.2 Q486.5 816.9 483.5 815.2 Q428 787 375.4 752.6 Q373.6 751.4 373.4 749 L371.2 735.4 Q371.1 732.3 373.4 733.4Z" fill="#66655f"/>
</g>
<line x1="394" y1="704.8" x2="407.6" y2="696.9" stroke="#3fd23f" stroke-opacity=".9" stroke-width="1.3"/>
<!--FEATURES_END-->
<path d="M859.6 357.4 C861.0 357.5 866.2 357.7 868.1 358.3 C870.0 358.9 870.0 360.0 871.0 361.0 C872.0 362.0 873.0 362.8 874.0 364.5 C875.0 366.2 876.5 368.1 877.2 371.0 C877.9 373.9 878.4 377.7 878.4 382.1 C878.4 386.5 877.8 392.2 877.2 397.3 C876.6 402.4 876.0 407.0 875.0 412.4 C874.0 417.8 872.7 423.2 871.0 429.7 C869.3 436.2 866.9 444.1 864.8 451.3 C862.7 458.5 861.2 464.4 858.6 472.9 C856.0 481.3 853.0 491.0 849.2 502.0 C845.4 513.0 839.1 527.1 835.6 538.9 C832.1 550.7 830.2 562.9 828.5 572.8 C826.8 582.7 826.0 588.4 825.1 598.3 C824.2 608.2 823.7 621.9 823.4 632.2 C823.1 642.5 823.5 651.4 823.5 660.0 C823.5 668.6 823.6 677.2 823.3 684.0 C822.9 690.8 822.6 694.8 821.4 700.9 C820.1 707.0 818.4 714.1 815.8 720.7 C813.2 727.3 810.4 734.0 805.9 740.4 C801.4 746.8 795.0 753.6 788.9 758.8 C782.8 764.0 779.1 765.6 769.2 771.5 C759.3 777.4 743.3 786.4 729.6 794.2 C715.9 802.0 701.3 810.4 687.2 818.2 C673.1 826.0 656.6 834.7 644.8 840.8 C633.0 846.9 624.5 851.4 616.5 854.9 C608.5 858.4 603.0 860.5 596.7 862.0 C590.5 863.5 585.6 864.6 579.0 864.0 C572.4 863.4 564.6 861.0 556.8 858.1 C548.9 855.2 542.3 852.1 531.9 846.9 C521.5 841.7 509.0 835.0 494.5 826.9 C480.0 818.8 461.3 807.8 444.7 798.3 C428.1 788.8 407.3 776.9 394.8 769.6 C382.3 762.3 376.5 759.2 369.9 754.6 C363.2 750.0 359.3 747.2 354.9 742.2 C350.5 737.2 346.6 731.4 343.7 724.7 C340.8 718.1 339.0 711.4 337.5 702.3 C336.0 693.2 335.2 685.3 334.5 669.9 C333.8 654.5 333.6 629.1 333.4 609.6 C333.2 590.1 333.3 568.2 333.4 553.1 C333.5 538.0 333.4 528.5 333.9 519.1 C334.4 509.7 335.2 502.4 336.2 496.5 C337.2 490.6 338.7 487.6 340.0 483.8 C341.3 480.0 342.5 477.1 344.0 473.9 C345.5 470.7 347.6 467.6 348.9 464.8 C350.2 462.0 350.6 459.4 351.9 456.9 C353.2 454.4 354.7 452.5 356.9 449.9 C359.1 447.3 361.9 444.2 364.9 441.4 C367.9 438.6 371.6 435.6 374.9 433.0 C378.2 430.4 381.6 428.2 384.9 426.0 C388.2 423.8 390.6 422.5 394.8 420.0 C399.0 417.5 405.0 414.0 410.0 411.2 C415.0 408.4 419.2 406.4 424.7 403.2 C430.2 400.0 437.1 396.0 443.0 392.0 C448.9 388.0 454.1 383.6 460.0 379.2 C465.9 374.8 472.2 370.3 478.3 365.4 C484.4 360.5 490.5 355.4 496.6 349.9 C502.7 344.4 508.8 338.4 514.9 332.5 C521.0 326.6 527.1 320.3 533.2 314.2 C539.3 308.1 545.3 302.1 551.4 296.0 C557.5 289.9 563.6 283.6 569.7 277.7 C575.8 271.8 581.9 265.8 588.0 260.3 C594.1 254.8 600.8 249.1 606.3 244.7 C611.8 240.3 616.6 236.6 620.9 233.8 C625.2 231.0 628.5 229.1 631.9 227.7 C635.3 226.3 638.4 225.7 641.1 225.5 C643.9 225.3 646.3 225.7 648.4 226.8 C650.5 227.9 652.3 230.0 653.9 231.9 C655.5 233.8 656.8 234.0 657.8 238.0 C658.8 242.0 659.2 249.7 659.7 255.7 C660.2 261.7 660.5 266.4 660.8 274.0 C661.0 281.6 661.1 292.2 661.2 301.4 C661.3 310.5 661.0 321.0 661.2 328.9 C661.4 336.8 661.9 342.3 662.6 349.0 C663.4 355.7 664.6 363.9 665.7 369.1 C666.8 374.3 667.5 376.0 669.2 380.0 C670.9 384.0 673.7 389.8 675.7 392.9 C677.7 395.9 680.1 397.4 681.0 398.3" fill="none" stroke="#15140f" stroke-width="1.3"/>
</g>
<!-- view cube -->
<g>
<ellipse cx="1202" cy="270" rx="16" ry="5" fill="#000" opacity=".12" filter="url(#b3)"/>
<path d="M1184.5 220.1 L1203 212 V231.7Z" fill="#f4f4f4"/>
<path d="M1184.5 220.1 L1203 231.7 V275 L1188.3 264.6Z" fill="#ececec"/>
<path d="M1184.5 220.1 L1203 212 M1184.5 220.1 L1203 231.7" stroke="#555" stroke-width=".9" fill="none"/>
<line x1="1160" y1="261.1" x2="1213" y2="230.4" stroke="#86ee86" stroke-width="1.05"/>
<path d="M1188.1 264.9 L1203 274.8" stroke="#ea7c7c" stroke-width="2.2"/>
<path d="M1183.1 212.9 L1188.5 264" stroke="#5f5ff0" stroke-width="2"/>
<text x="1177.4" y="209.9" font-size="13.5" font-weight="bold" fill="#7a7af4" font-family="Liberation Sans, sans-serif">Z</text>
<text transform="translate(1191.5 249.5) rotate(28) skewX(-8)" font-size="7" fill="#8a8a8a" font-family="Liberation Sans, sans-serif">PO</text>
</g>
<!--OVERLAY-->
</svg>
<!-- left browser panel (page coords: top offset -170) -->
<div class="abs" style="left:-2px;top:25.4px;width:258.9px;height:61.2px;background:#f0f0f0;border:1px solid #c6c6c6"></div>
<div class="abs" style="left:-2px;top:55px;width:258px;height:1px;background:#c8c8c8"></div>
<div class="abs" style="left:-5.5px;top:64.2px;font-size:13px;color:#555;line-height:14px">S</div>
<!-- nav bar -->
<div class="abs" style="left:439.3px;top:763px;width:296px;height:29.8px;background:#f2f2f2"></div>
<!--VPUI-->
</div>
<div id="bottombar" class="abs"></div>
<svg width="1203" height="76" viewBox="0 928 1203 76" style="left:0;top:928px" font-family="Liberation Sans, sans-serif">
<!-- NAV ICONS -->
<g id="nav">
<!-- orbit -->
<path d="M461 948.2 A9 3.4 0 1 0 458 951.8" fill="none" stroke="#3a3a3a" stroke-width="1.6"/>
<path d="M453.6 937.6 L457 942.8 H455 V957.4 H452.2 V942.8 H450.2Z" fill="#fff" stroke="#3a3a3a" stroke-width="1"/>
<path d="M444.6 952.6 L449.4 949.6 L449.6 955.4Z" fill="#3a3a3a"/>
<path d="M461 948.2 A9 3.4 0 0 0 456.2 945.6" fill="none" stroke="#3a3a3a" stroke-width="1.6"/>
<path d="M469.9 946 h6 l-3 4z" fill="#333"/>
<!-- look at -->
<path d="M486.4 944 L491.2 939.4 L493.4 942 L498.8 939.2 V944" fill="#c8ccd8" stroke="#4a4e5a" stroke-width="1.1" stroke-linejoin="round"/>
<rect x="484.6" y="944" width="18.8" height="13.2" rx="1" fill="#f6f6f6" stroke="#4a4e5a" stroke-width="1.3"/>
<rect x="488.1" y="948.2" width="11.7" height="5.7" fill="#a8b0c8" stroke="#4a4e5a" stroke-width="1"/>
<!-- hand -->
<path d="M522.4 957.6 Q519.6 952.6 517.4 949.6 Q518.4 947.8 520.6 949.4 L522.6 951.4 L521.6 942.2 Q521.8 940.4 523.2 940.6 Q524.4 940.8 524.6 942.2 L525.4 946.4 L525.2 940 Q525.4 938.2 526.8 938.2 Q528.2 938.2 528.4 940 L528.8 946.2 L529.4 940.4 Q529.8 938.8 531 939 Q532.4 939.2 532.4 941 L532.2 946.8 L533.6 942.6 Q534.2 941.2 535.4 941.6 Q536.4 942 536.2 943.6 L534.8 950.6 Q534.4 954.8 531.6 957.6Z" fill="#fff" stroke="#3a3a3a" stroke-width="1.1" stroke-linejoin="round"/>
<!-- zoom -->
<circle cx="555" cy="946.6" r="5.4" fill="#dcecf2" stroke="#3a3a3a" stroke-width="1.5"/>
<path d="M559 950.8 L564.2 955.6" stroke="#3a3a3a" stroke-width="2.6" stroke-linecap="round"/>
<path d="M563.8 941.6 H568.8 M566.3 939.2 V944 M563.8 946 H568.8" stroke="#3a3a3a" stroke-width="1"/>
<!-- zoom window -->
<rect x="581.8" y="938.2" width="18.6" height="19" fill="none" stroke="#444" stroke-width="1" stroke-dasharray="2.4 1.6"/>
<circle cx="589.3" cy="946" r="7" fill="#e0eef2" stroke="#3a3a3a" stroke-width="1.5"/>
<path d="M594.6 951.4 L599.8 956.6" stroke="#3a3a3a" stroke-width="3" stroke-linecap="round"/>
<path d="M607.9 946 h6.6 l-3.3 4z" fill="#333"/>
<!-- display -->
<rect x="623" y="938.6" width="19.4" height="15.2" rx="1.6" fill="#f4f4f4" stroke="#555" stroke-width="1.1"/>
<rect x="625.6" y="940.8" width="14.2" height="10.4" rx=".8" fill="#9ab6e4" stroke="#3a5a9a" stroke-width="1"/>
<path d="M629.6 954 H635.8 L637.6 957.2 H627.8Z" fill="#eee" stroke="#555" stroke-width=".9"/>
<path d="M645.8 946 h6.6 l-3.3 4z" fill="#333"/>
<!-- grid -->
<linearGradient id="gGrid" x1="0" y1="0" x2="0" y2="1"><stop offset="0" stop-color="#7c8294"/><stop offset="1" stop-color="#9aa2b8"/></linearGradient>
<rect x="661.6" y="938.6" width="19" height="18.8" fill="url(#gGrid)" stroke="#444" stroke-width="1.1"/>
<g fill="#fff">
<rect x="663.6" y="940.6" width="2.2" height="2.2"/><rect x="667.1" y="940.6" width="2.2" height="2.2"/><rect x="670.6" y="940.6" width="2.2" height="2.2"/><rect x="674.1" y="940.6" width="2.2" height="2.2"/><rect x="677.4" y="940.6" width="2.2" height="2.2"/>
<rect x="663.6" y="944.1" width="2.2" height="2.2"/><rect x="667.1" y="944.1" width="2.2" height="2.2"/><rect x="670.6" y="944.1" width="2.2" height="2.2"/><rect x="674.1" y="944.1" width="2.2" height="2.2"/><rect x="677.4" y="944.1" width="2.2" height="2.2"/>
<rect x="663.6" y="947.6" width="2.2" height="2.2"/><rect x="667.1" y="947.6" width="2.2" height="2.2"/><rect x="670.6" y="947.6" width="2.2" height="2.2"/><rect x="674.1" y="947.6" width="2.2" height="2.2"/><rect x="677.4" y="947.6" width="2.2" height="2.2"/>
<g opacity=".75"><rect x="663.6" y="951.1" width="2.2" height="2.2"/><rect x="667.1" y="951.1" width="2.2" height="2.2"/><rect x="670.6" y="951.1" width="2.2" height="2.2"/><rect x="674.1" y="951.1" width="2.2" height="2.2"/><rect x="677.4" y="951.1" width="2.2" height="2.2"/></g>
<g opacity=".55"><rect x="663.6" y="954.4" width="2.2" height="2.2"/><rect x="667.1" y="954.4" width="2.2" height="2.2"/><rect x="670.6" y="954.4" width="2.2" height="2.2"/><rect x="674.1" y="954.4" width="2.2" height="2.2"/><rect x="677.4" y="954.4" width="2.2" height="2.2"/></g>
</g>
<path d="M684.4 946 h6.6 l-3.3 4z" fill="#333"/>
<!-- viewports -->
<g fill="#93abdc" stroke="#3a5a9a" stroke-width="1.1">
<rect x="700.3" y="939.6" width="8.4" height="7" rx="1.4"/><rect x="710.2" y="939.6" width="8.4" height="7" rx="1.4"/>
<rect x="700.3" y="948.2" width="8.4" height="7" rx="1.4"/><rect x="710.2" y="948.2" width="8.4" height="7" rx="1.4"/>
</g>
<path d="M722.9 946 h6.6 l-3.3 4z" fill="#333"/>
</g>
<!-- timeline -->
<rect x="-2" y="996.4" width="3.4" height="1.6" fill="#333"/>
<path d="M17.4 992.4 L28.4 998.6 L17.4 1004.8Z" fill="#333"/><rect x="28.8" y="992.4" width="2.8" height="12" fill="#333"/>
<path d="M66 990.6 H76 Q79.6 990.8 79.6 994 V1004 H62.6 V994.6 Q62.8 991 66 990.6Z" fill="#9a6fe0"/>
<path d="M66.4 991.4 H75.6 Q78.4 991.6 78.8 993.4 L75.2 995 Q74.4 993.6 72 993.6 H66.8 Q64 993.8 63.6 996 Q63.4 992 66.4 991.4Z" fill="#cdb0ff"/>
<rect x="64.4" y="994.6" width="10.4" height="10" rx="2.6" fill="#b08cf0"/>
<path d="M78.1 981.5 H93.8 V984.6 L87.2 992.6 V1004 H84.8 V992.6 L78.1 984.6Z" fill="#5a5a5a"/>
</svg>
</body></html>
